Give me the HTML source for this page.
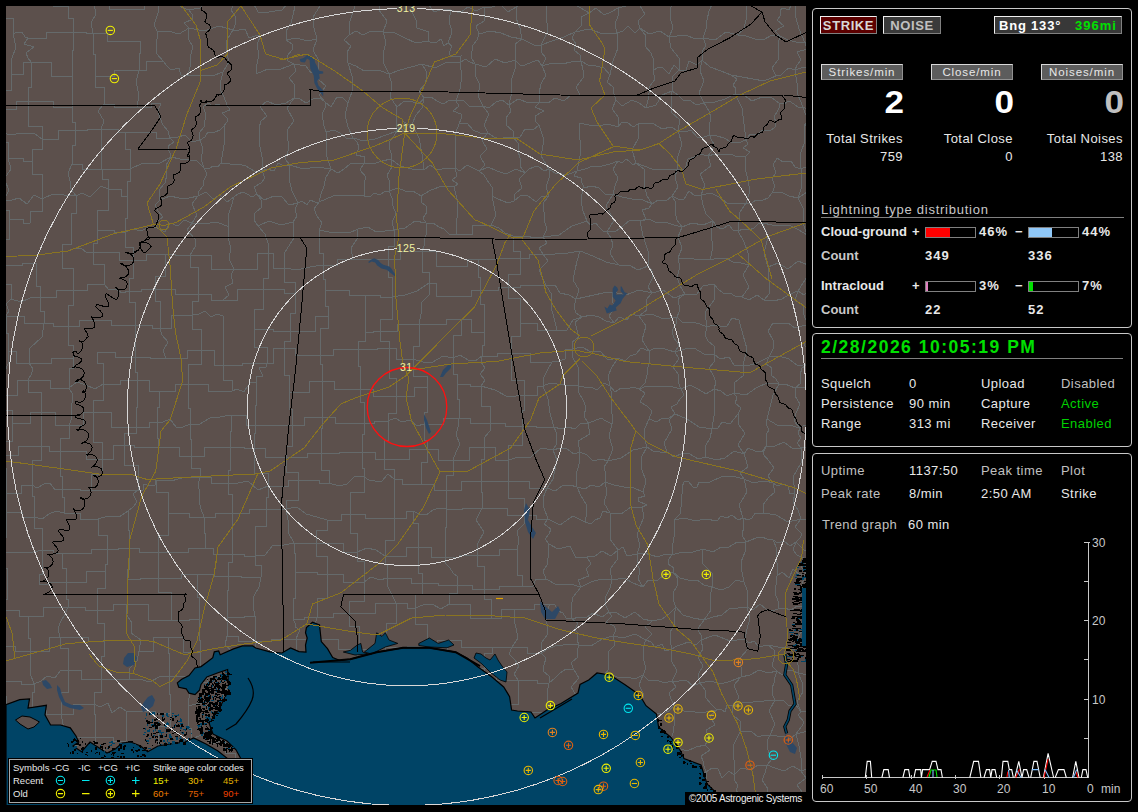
<!DOCTYPE html>
<html><head><meta charset="utf-8">
<style>
*{margin:0;padding:0;box-sizing:border-box}
html,body{width:1138px;height:812px;background:#000;overflow:hidden;font-family:"Liberation Sans",sans-serif;color:#e8e8e8}
.abs{position:absolute;white-space:nowrap}
#map{position:absolute;left:6px;top:6px;width:800px;height:799px;background:#5c504c;overflow:hidden}
#map svg{position:absolute;left:-6px;top:-6px}
.box{position:absolute;left:812px;width:320px;border:1px solid #c8c8c8;border-radius:4px}
.btn{position:absolute;border:1px solid;border-color:#f0f0f0 #808080 #808080 #f0f0f0;font-weight:bold;font-size:13px;line-height:18px;text-align:center}
.lbtn{position:absolute;height:16px;width:82px;background:#5c5c5c;border:1px solid;border-color:#d8d8d8 #909090 #909090 #d8d8d8;font-size:11.5px;line-height:14px;text-align:center;color:#e8e8e8;letter-spacing:0.9px}
.big{position:absolute;font-weight:bold;font-size:30.5px;line-height:30px;text-align:right;width:82px;transform:scaleX(1.15);transform-origin:right center}
.t13{font-size:13px;line-height:15px;letter-spacing:0.45px}
.t13.b{letter-spacing:0}
.r{text-align:right}
.lg{font-size:9.5px;line-height:11px;color:#e8e8e8}
.b{font-weight:bold}
.bar{position:absolute;width:51px;height:11px;border:1px solid #808080;background:#000}
.bar div{height:100%}
</style></head><body>
<div id="map">
<svg width="812" height="812" viewBox="0 0 812 812">
<g fill="none" stroke="#656a6b" stroke-width="1" shape-rendering="crispEdges">
<path d="M3 5L29 5L29 3L44 3M3 5L3 18L13 18L13 34M44 3L53 3L53 6L68 6M68 6L77 3L85 2L94 4M68 6L68 18L73 18L73 32M94 4L109 4L109 9L134 9M94 4L96 14L91 23L93 33M134 9L144 9L144 0L157 0M157 0L166 -0L174 1L181 7L189 10M157 0L159 7L158 13L156 19L154 25L157 31M189 10L200 8L209 -0L220 -3L231 -4M189 10L192 14L193 19L184 23L189 28M231 -4L241 -1L252 1L258 12L269 12M231 -4L235 2L231 10L235 16L236 23L233 30M269 12L275 11L282 10L287 4L295 6M295 6L298 0L303 -1L309 -1L315 2L318 -5M295 6L293 15L291 23L286 31L286 40M318 -5L331 -7L344 -3L357 -4M318 -5L320 6L313 17L314 28L317 39M357 -4L363 -2L369 2L377 -6L382 -1M357 -4L354 9L350 21L349 35M382 -1L392 3L402 0L412 3M382 -1L379 10L387 21L383 32M412 3L420 2L428 4L434 12L443 9L451 10M412 3L412 12L416 20L417 28L429 32L428 41M451 10L460 13L468 7L476 11L484 7M451 10L449 21L452 32L448 43M484 7L492 7L500 4L508 12L516 7M484 7L484 14L484 21L476 26L479 34M516 7L526 2L536 -0L547 0M516 7L516 18L520 28L522 39M547 0L562 3L576 5L589 13M547 0L546 15L548 31L541 45M589 13L596 8L604 15L611 12L618 8M589 13L581 17L581 26L575 32M618 8L626 6L633 0L641 -1M618 8L618 16L615 24L617 33M641 -1L648 -6L656 -3L665 1L672 -4M641 -1L640 6L645 14L638 21L640 28M672 -4L681 -7L688 -0L697 -2L705 0L713 2M672 -4L671 7L670 17L673 28L669 37M713 2L720 5L726 1L733 2L740 5L746 2M713 2L709 11L707 20L706 29L703 38M746 2L746 11L746 20L744 28L738 35M780 10L783 8L789 10L791 5L791 -0L795 -1M780 10L781 15L777 20L784 26L775 31L780 36M795 -1L811 -3L827 6L843 3M795 -1L795 14L799 29L805 43M843 3L844 12L834 15L832 22L830 30M13 34L17 32L22 32L25 37L28 38M13 34L16 47L11 61L11 74M28 38L46 38L46 32L73 32M28 38L24 44L34 47L26 53L28 58L31 62M73 32L86 32L86 33L93 33M73 32L73 50L72 50L72 76M93 33L107 33L107 41L140 41M93 33L93 54L95 54L95 76M140 41L140 53L139 53L139 70M157 31L168 31L179 34L189 28M157 31L157 39L156 47L157 54L163 61M189 28L204 31L219 26L233 30M189 28L188 38L193 47L190 57L190 67L188 76M233 30L239 30L245 29L249 38L255 36L261 35M233 30L227 40L226 50L229 62L223 72M261 35L257 44L259 55L257 64L256 74M286 40L297 38L307 41L317 39M286 40L292 44L293 49L287 56L288 61L294 64M317 39L313 50L319 61L318 72M349 35L356 31L363 35L369 32L376 31L383 32M349 35L344 40L351 46L347 52L347 57L348 63M383 32L395 33L405 38L416 43L428 41M383 32L386 42L383 54L384 64L389 74M428 41L432 43L437 42L441 39L444 46L448 43M448 43L452 46L449 53L451 57L461 56L460 63M479 34L490 31L501 33L511 37L522 39M479 34L477 40L473 45L472 51L471 57L475 64M522 39L528 42L534 45L541 45M522 39L515 44L516 52L515 60M541 45L552 41L564 37L575 32M541 45L541 52L546 58L542 66M575 32L589 29L603 34L617 33M575 32L572 38L576 44L574 50L580 55L581 61M617 33L623 31L628 26L635 33L640 28M617 33L618 48L613 61L610 75M640 28L649 34L660 31L669 37M640 28L646 36L645 46L651 53L654 61L653 71M669 37L677 36L686 35L695 39L703 38M669 37L671 48L679 58L679 70M703 38L715 40L726 32L738 35M703 38L706 45L702 52L702 60M738 35L746 36L755 39L763 40L772 35L780 36M780 36L788 40L796 42L805 43M780 36L778 44L779 52L778 60L772 68L776 76M805 43L813 37L821 32L830 30M805 43L807 49L797 52L801 60L797 65L795 70M830 30L827 39L832 47L834 55L831 64L836 72M11 74L23 74L23 62L31 62M11 74L11 90L1 90L1 109M31 62L51 62L51 76L72 76M31 62L31 87L28 87L28 101M72 76L72 90L72 90L72 107M95 76L114 76L114 70L139 70M95 76L95 87L104 87L104 104M139 70L146 70L146 61L163 61M139 70L136 82L139 95L137 107M163 61L167 66L171 70L179 68L181 75L188 76M188 76L200 75L212 76L223 72M223 72L221 80L220 89L224 97L227 105M256 74L268 69L281 69L294 64M294 64L300 65L306 66L311 73L318 72M294 64L296 71L289 78L294 84L295 91L294 98M318 72L319 80L326 86L319 95L325 102M348 63L356 66L364 71L373 70L381 71L389 74M348 63L352 76L353 89L348 103M389 74L400 70L411 67L422 64M389 74L392 85L390 97L397 107M422 64L435 68L447 62L460 63M422 64L426 71L427 77L425 84L419 91L424 98M460 63L465 59L470 62L475 64M460 63L462 76L460 89L456 101M475 64L486 67L495 59L505 63L515 60M475 64L475 75L480 85L478 96L483 106M515 60L520 65L525 65L532 62L538 60L542 66M515 60L515 69L512 78L511 87L511 96L509 105M542 66L552 63L562 64L571 62L581 61M542 66L546 75L541 84L539 93L540 102M581 61L588 65L596 66L604 68L610 75M581 61L583 70L583 78L576 87L580 95M610 75L607 82L613 87L614 94L616 100M653 71L658 67L663 68L669 74L674 65L679 70M653 71L655 79L650 86L649 93L648 100L646 108M679 70L686 70L689 61L697 65L702 60M679 70L673 76L672 83L672 91M702 60L710 67L721 71L731 75M702 60L700 71L704 81L699 93L704 103M731 75L742 77L753 79L764 81L776 76M731 75L737 79L733 85L736 89L735 94M776 76L781 75L785 71L789 68L795 70M795 70L804 67L812 70L819 75L828 72L836 72M795 70L797 83L798 95L803 107M836 72L833 78L834 84L833 91L835 97L833 103M1 109L16 109L16 101L28 101M1 109L1 121L-1 121L-1 131M28 101L53 101L53 107L72 107M28 101L28 126L42 126L42 139M72 107L72 122L75 122L75 130M104 104L114 104L114 107L137 107M104 104L98 111L104 121L101 129M137 107L151 107L151 103L161 103M161 103L158 111L160 118L163 125L168 131L170 138M203 107L208 103L213 106L217 104L222 106L227 105M203 107L206 114L205 120L204 127L199 133L200 140M227 105L230 110L222 113L227 118L227 122L224 126M267 101L276 105L286 103L294 98M267 101L260 107L267 116L261 121L259 128M294 98L300 99L306 103L313 99L320 98L325 102M294 98L287 108L294 121L287 130M325 102L331 107L337 97L343 98L348 103M325 102L325 108L322 114L323 120L324 126L326 132M348 103L345 115L348 127L353 138M397 107L403 102L410 101L419 104L424 98M397 107L396 115L396 123L397 131M424 98L431 97L437 101L443 104L450 100L456 101M424 98L422 108L416 115L412 124M456 101L463 100L469 106L476 106L483 106M456 101L459 106L453 111L461 114L461 119L459 124M483 106L489 108L496 102L502 100L509 105M483 106L489 114L484 125L488 133M509 105L518 99L529 103L540 102M509 105L511 111L506 118L506 125L513 131L513 137M540 102L548 103L555 98L564 101L571 95L580 95M540 102L535 107L544 111L535 116L535 121L539 125M616 100L622 106L632 100L639 103L646 108M616 100L612 109L619 118L618 127M646 108L656 105L662 95L672 91M672 91L678 95L683 100L691 101L696 105L704 103M672 91L671 102L671 112L680 120L678 131M704 103L715 102L725 99L735 94M704 103L709 111L711 118L709 127L710 135M735 94L744 95L752 101L762 97L771 97L779 103M735 94L742 108L744 124L746 140M779 103L784 104L789 101L794 104L798 107L803 107M779 103L779 108L777 112L774 117L776 122L775 127M803 107L811 111L817 100L826 107L833 103M803 107L805 113L808 120L804 126M833 103L826 112L834 123L827 131M-1 131L7 134L16 134L25 133L34 133L42 139M-1 131L-1 142L8 142L8 158M42 139L58 139L58 130L75 130M42 139L42 149L32 149L32 161M75 130L87 130L87 129L101 129M75 130L75 145L72 145L72 164M101 129L118 129L118 132L125 132M101 129L102 142L101 155L102 169M125 132L156 132L156 138L170 138M125 132L125 149L130 149L130 169M170 138L178 137L185 135L192 142L200 140M170 138L174 142L168 146L168 149L170 153L171 157M200 140L205 137L208 132L215 132L220 130L224 126M200 140L203 149L201 159L204 168M224 126L225 139L223 151L221 163M259 128L259 142L262 157L262 171M287 130L287 137L289 144L288 151L285 159L290 165M326 132L334 130L340 133L346 138L353 138M326 132L326 145L327 157L331 169M353 138L364 141L375 139L386 135L397 131M353 138L357 142L359 147L356 155L365 157L364 163M397 131L399 127L405 132L404 122L409 125L412 124M397 131L394 136L390 141L389 147L391 153L391 159M412 124L419 138L422 154L424 170M459 124L467 123L473 130L480 133L488 133M459 124L456 132L455 141L455 150L456 159L455 168M488 133L494 137L500 139L506 137L513 137M488 133L482 140L487 149L480 156L485 165L479 171M513 137L520 137L525 129L533 130L539 125M513 137L518 143L518 151L520 158L520 166L525 173M539 125L544 140L541 156L549 169M579 123L589 125L598 126L608 124L618 127M579 123L580 140L580 156L577 171M618 127L622 122L627 122L633 127L638 124M638 124L646 123L654 124L662 129L671 127L678 131M638 124L639 137L632 150L636 163M678 131L685 132L691 130L697 137L704 137L710 135M678 131L682 144L678 156L677 169M710 135L717 136L724 138L731 142L738 143L746 140M710 135L711 139L714 144L713 148L711 152L708 156M746 140L750 134L758 135L762 130L770 131L775 127M746 140L748 144L743 148L750 152L746 156M804 126L810 125L816 126L820 134L827 131M804 126L805 141L800 155L801 169M827 131L823 141L829 149L830 158M8 158L23 158L23 161L32 161M8 158L11 169L4 179L9 190L4 200M32 161L32 174L42 174L42 199M72 164L82 164L82 169L102 169M72 164L68 173L70 181L71 189L76 196M102 169L111 169L111 169L130 169M102 169L102 179L108 179L108 189M130 169L143 163L158 164L171 157M130 169L130 181L127 181L127 196M171 157L180 159L189 160L197 161L204 168M171 157L166 165L167 174L165 183L159 190L160 200M204 168L209 169L213 166L218 167L221 163M204 168L207 174L204 180L203 186L199 191L198 196M221 163L230 164L238 164L246 166L254 171L262 171M262 171L267 169L274 171L278 163L284 166L290 165M262 171L265 178L261 183L254 187L257 194M290 165L303 169L317 167L331 169M290 165L289 179L292 191L298 203M331 169L338 173L344 169L350 164L357 163L364 163M331 169L326 177L324 186L321 194L319 202M364 163L373 164L382 161L391 159M364 163L360 170L366 177L364 183L364 190L364 196M391 159L400 166L412 169L424 170M391 159L392 167L387 175L390 183L389 191M424 170L430 165L436 169L442 169L448 168L455 168M455 168L460 171L467 165L473 168L479 171M455 168L456 172L457 176L452 180L458 184L454 187M479 171L488 167L497 171L506 174L516 169L525 173M479 171L484 175L487 180L490 184L493 189L492 196M525 173L529 169L534 167L538 166L544 171L549 169M525 173L519 179L522 188L515 194L514 201M549 169L555 173L562 174L569 174L577 171M549 169L549 178L546 187L549 196M577 171L585 169L593 166L602 166L610 164L618 161M577 171L574 176L581 178L581 181L583 185L583 188M618 161L622 163L626 159L629 161L633 165L636 163M618 161L613 169L618 178L615 186L613 194M636 163L644 166L652 169L660 169L668 170L677 169M636 163L644 169L644 179L645 188L647 196L652 204M677 169L685 169L688 159L694 157L700 154L708 156M677 169L675 178L678 187L672 196M708 156L715 154L723 155L730 154L738 157L746 156M708 156L711 166L700 174L705 185L701 195M746 156L745 168L748 180L750 191L746 203M777 158L783 162L791 161L795 167L801 169M777 158L773 165L776 172L772 179L775 186L772 193M801 169L808 166L815 163L823 161L830 158M801 169L802 179L801 189L798 198M830 158L830 165L834 171L840 176L844 182L844 189M4 200L12 200L19 198L27 204L34 195L42 199M4 200L4 210L9 210L9 219M42 199L53 194L64 195L76 196M42 199L42 211L30 211L30 223M76 196L82 193L90 197L95 192L101 186L108 189M76 196L76 213L71 213L71 225M108 189L121 189L121 196L127 196M108 189L108 210L97 210L97 230M127 196L127 218L125 218L125 232M160 200L170 196L179 198L189 198L198 196M160 200L155 205L158 211L163 217L156 222L157 228M198 196L206 192L213 199L220 195L227 202L234 197M198 196L192 204L197 215L192 223M234 197L238 194L243 192L247 194L252 197L257 194M234 197L231 207L228 216L229 227M257 194L264 200L274 196L282 197L289 205L298 203M257 194L261 200L262 207L255 213L254 220L258 226M298 203L302 201L307 205L310 200L315 202L319 202M298 203L295 209L297 216L293 222M319 202L333 196L349 195L364 196M319 202L314 209L317 216L322 223L319 230M364 196L370 197L374 193L380 195L384 192L389 191M389 191L398 188L405 191L413 191L421 196M389 191L392 198L393 206L396 214L392 222L394 230M421 196L431 190L442 186L454 187M421 196L421 202L426 206L427 212L423 218L426 223M454 187L458 203L457 218L456 234M492 196L498 199L503 201L508 203L514 201M492 196L494 206L496 215L491 225M514 201L520 196L527 195L536 202L542 196L549 196M549 196L543 203L544 212L544 220L547 229L543 237M583 188L592 186L599 188L605 194L613 194M583 188L581 200L583 211L587 221M613 194L622 197L632 199L643 200L652 204M613 194L606 206L614 220L607 232M652 204L658 200L666 201L672 196M652 204L649 208L642 210L646 219L640 221M672 196L678 199L684 199L689 191L695 196L701 195M672 196L676 203L675 212L677 220L682 227M701 195L711 193L719 197L727 203L736 204L746 203M701 195L703 205L706 214L713 221M746 203L752 203L756 200L763 200L768 198L772 193M746 203L740 212L739 222L738 231M772 193L781 192L789 196L798 198M798 198L807 192L817 196L825 191L834 189L844 189M798 198L804 210L803 223L807 235M844 189L846 200L846 210L844 221M9 219L23 219L23 223L30 223M9 219L9 239L4 239L4 265M71 225L71 244L62 244L62 252M97 230L114 230L114 232L125 232M97 230L97 243L93 243L93 252M125 232L133 229L141 231L149 227L157 228M125 232L125 247L133 247L133 260M157 228L165 232L170 223L178 226L184 220L192 223M192 223L204 224L217 222L229 227M192 223L187 230L195 239L195 247L190 255M229 227L228 238L231 248L229 259L234 269M258 226L269 221L281 225L293 222M258 226L265 234L268 243L268 253M293 222L294 238L285 252L284 268M319 230L329 232L339 232L349 233L358 229M319 230L319 253L323 253L323 265M358 229L368 227L376 232L385 231L394 230M358 229L357 239L351 248L353 259M394 230L405 228L415 221L426 223M394 230L394 246L388 246L388 259M426 223L433 223L439 227L444 229L449 234L456 234M426 223L426 229L426 235L424 240L424 246L422 251M456 234L472 234L472 225L491 225M491 225L499 228L505 233L513 236M513 236L530 236L530 237L543 237M513 236L513 251L520 251L520 258M543 237L559 235L572 226L587 221M543 237L547 243L539 248L543 254M587 221L590 225L596 223L599 227L603 231L607 232M607 232L616 231L623 226L630 220L640 221M607 232L611 238L613 245L610 253L614 260L619 265M640 221L649 219L657 223L665 222L674 225L682 227M640 221L643 236L648 251L648 266M682 227L692 223L703 225L713 221M682 227L678 237L682 248L678 258M713 221L717 227L722 229L729 225L733 230L738 231M713 221L711 234L713 247L710 260M738 231L743 229L749 230L754 228L758 224L763 223M738 231L744 242L748 253L749 265M763 223L772 225L782 225L791 226L799 230L807 235M763 223L768 237L764 253L768 267M807 235L816 237L823 233L831 230L838 227L844 221M807 235L806 245L809 255L808 265M844 221L847 231L846 240L843 249L842 258M4 265L22 265L22 263L36 263M4 265L4 284L11 284L11 299M36 263L36 286L40 286L40 297M62 252L68 251L75 248L81 248L87 253L93 252M62 252L62 268L73 268L73 290M93 252L119 252L119 260L133 260M93 252L93 264L104 264L104 284M133 260L146 260L146 254L165 254M133 260L133 278L129 278L129 291M165 254L175 254L175 255L190 255M165 254L165 276L155 276L155 289M190 255L211 255L211 269L234 269M190 255L190 267L198 267L198 294M234 269L257 269L257 253L268 253M234 269L231 275L233 283L225 287L229 295L223 300M268 253L273 253L273 268L284 268M268 253L268 278L263 278L263 289M284 268L297 270L310 267L323 265M284 268L284 282L295 282L295 293M323 265L337 265L337 259L353 259M323 265L323 279L325 279L325 290M353 259L375 259L375 259L388 259M388 259L400 259L400 251L422 251M388 259L388 277L392 277L392 297M422 251L436 251L436 266L456 266M422 251L422 272L429 272L429 283M456 266L467 266L467 259L478 259M478 259L495 259L495 258L520 258M478 259L478 277L480 277L480 290M520 258L529 258L529 254L543 254M520 258L520 274L508 274L508 287M543 254L555 254L568 253L580 251M543 254L548 261L539 270L542 277L546 285M580 251L593 256L606 262L619 265M580 251L577 261L575 270L573 280L579 290L576 299M619 265L629 265L638 270L648 266M648 266L653 272L652 279L648 287L652 293M678 258L686 258L694 259L702 259L710 260M678 258L680 267L677 277L680 286L685 294M710 260L718 258L726 258L733 262L741 263L749 265M749 265L743 275L749 287L742 297M768 267L778 263L788 269L798 261L808 265M768 267L768 274L769 281L769 287L769 294L764 300M808 265L819 260L831 264L842 258M808 265L808 275L803 283L798 291M842 258L836 264L841 273L835 279L836 287L830 292M11 299L21 302L30 298L40 297M11 299L6 304L9 311L6 316M40 297L56 297L56 290L73 290M40 297L40 311L44 311L44 323M73 290L87 290L87 284L104 284M73 290L73 305L68 305L68 326M104 284L109 290L116 289L122 293L129 291M129 291L141 291L141 289L155 289M129 291L129 302L135 302L135 325M155 289L175 289L175 294L198 294M155 289L155 301L160 301L160 328M198 294L211 294L211 300L223 300M198 294L198 301L192 301L192 315M223 300L237 300L237 289L263 289M263 289L284 289L284 293L295 293M263 289L263 309L254 309L254 329M295 293L295 313L290 313L290 331M325 290L349 290L349 295L365 295M325 290L325 306L328 306L328 316M365 295L380 295L380 297L392 297M365 295L365 314L365 314L365 332M392 297L405 295L417 291L429 283M392 297L392 319L380 319L380 331M429 283L436 283L436 296L454 296M429 283L430 294L421 303L421 314L419 324M454 296L471 296L471 290L480 290M480 290L498 290L498 287L508 287M480 290L480 304L484 304L484 332M508 287L520 287L520 285L546 285M508 287L508 298L520 298L520 323M546 285L555 285L560 293L569 295L576 299M546 285L552 295L551 307L554 318L557 330M576 299L585 297L594 295L603 293L613 292M576 299L574 307L576 313L582 317M613 292L626 295L639 290L652 293M613 292L612 300L615 308L609 316L614 323M652 293L663 290L674 298L685 294M652 293L646 300L647 310L639 316M685 294L696 295L703 286L714 284M685 294L678 299L679 305L679 312L677 317M714 284L718 289L723 293L730 293L735 296L742 297M714 284L715 299L705 312L707 327M742 297L749 300L757 295L764 300M764 300L773 301L782 299L790 294L798 291M798 291L804 295L811 287L817 287L824 294L830 292M798 291L795 300L803 305L803 312L805 318L809 325M830 292L838 300L833 314L839 323L845 332M6 316L24 316L24 323L44 323M6 316L6 333L8 333L8 351M44 323L53 323L53 326L68 326M44 323L42 337L30 348L29 363M68 326L79 326L79 320L98 320M68 326L68 345L73 345L73 358M98 320L111 320L111 325L135 325M135 325L152 325L152 328L160 328M135 325L135 335L135 335L135 357M160 328L171 328L171 315L192 315M160 328L162 335L168 342L163 351L166 358M192 315L199 314L205 311L211 317L217 314L223 316M192 315L192 329L201 329L201 350M223 316L223 348L223 348L223 365M254 329L273 329L273 331L290 331M254 329L254 347L267 347L267 363M290 331L315 331L315 316L328 316M290 331L290 341L284 341L284 348M328 316L328 328L320 328L320 355M365 332L373 332L373 331L380 331M365 332L365 341L358 341L358 349M380 331L397 331L397 324L419 324M380 331L380 341L389 341L389 348M419 324L446 324L446 319L461 319M419 324L419 346L413 346L413 359M461 319L471 319L471 332L484 332M461 319L461 335L453 335L453 358M484 332L484 345L482 345L482 356M520 323L537 323L537 330L557 330M520 323L520 336L511 336L511 353M557 330L567 330L573 320L582 317M582 317L591 315L599 317L606 321L614 323M582 317L575 322L577 330L579 337L572 342L572 349M614 323L619 317L627 320L631 314L639 316M639 316L651 314L664 319L677 317M639 316L646 326L642 340L649 351M677 317L683 323L692 322L700 324L707 327M677 317L676 324L672 331L674 338L679 345L675 352M707 327L713 325L720 326L727 326L732 318L739 320M707 327L705 335L708 341L714 346L714 354M739 320L743 335L747 349L743 365M773 323L781 323L788 323L795 328L802 326L809 325M773 323L768 331L773 340L773 349L769 357M809 325L820 330L834 326L845 332M809 325L810 334L804 344L810 354L808 364M845 332L844 337L841 341L840 346L836 349L835 354M8 351L16 351L16 363L29 363M8 351L9 361L6 369L1 377L-1 386L-3 395M29 363L51 363L51 358L73 358M29 363L33 369L31 375L28 380M73 358L73 368L69 368L69 388M97 352L115 352L115 357L135 357M97 352L97 363L103 363L103 384M135 357L150 357L150 358L166 358M135 357L135 372L137 372L137 380M166 358L187 358L187 350L201 350M201 350L214 350L214 365L223 365M201 350L201 364L188 364L188 384M223 365L242 365L242 363L267 363M223 365L223 380L232 380L232 391M267 363L273 363L273 348L284 348M267 363L266 367L259 368L263 376L256 377L256 382M284 348L295 348L295 355L320 355M284 348L284 375L289 375L289 392M320 355L333 355L333 349L358 349M320 355L320 364L322 364L322 381M358 349L377 349L377 348L389 348M358 349L358 366L360 366L360 389M389 348L396 348L396 359L413 359M389 348L389 378L396 378L396 396M413 359L423 362L433 362L443 356L453 358M413 359L413 376L427 376L427 387M453 358L460 355L468 360L475 361L482 356M453 358L453 374L457 374L457 384M482 356L497 356L497 353L511 353M482 356L481 362L485 368L480 374L485 380L481 386M511 353L530 353L530 362L552 362M511 353L511 380L524 380L524 395M552 362L559 361L565 359L565 349L572 349M552 362L548 369L544 377L543 386M572 349L582 347L591 352L600 351L608 360L618 358M572 349L573 358L578 367L578 376L578 386M618 358L625 361L630 356L636 354L641 348L649 351M618 358L612 367L608 376L610 386M649 351L655 348L662 348L668 350L675 352M649 351L650 359L648 367L647 375L645 383L639 389M675 352L685 349L694 348L704 354L714 354M675 352L679 359L673 367L678 374L678 382L681 389M714 354L720 359L729 357L734 365L743 365M714 354L715 361L709 368L713 375L716 382L714 389M743 365L750 365L757 363L763 360L769 357M743 365L744 375L734 383L734 393M769 357L779 356L789 359L798 366L808 364M769 357L766 364L772 368L771 375L776 379L779 384M808 364L814 357L822 360L827 354L835 354M808 364L802 368L800 375L801 383L795 388M-3 395L17 395L17 380L28 380M-3 395L-3 410L12 410L12 423M28 380L50 380L50 388L69 388M28 380L28 392L41 392L41 412M69 388L77 382L86 385L95 389L103 384M69 388L73 395L72 403L71 410L72 418L69 425M103 384L120 384L120 380L137 380M103 384L103 400L93 400L93 412M137 380L149 380L149 391L159 391M137 380L137 407L136 407L136 427M159 391L175 391L175 384L188 384M159 391L159 407L157 407L157 422M188 384L208 384L208 391L232 391M188 384L188 408L190 408L190 424M232 391L237 389L244 392L247 387L251 382L256 382M256 382L256 405L255 405L255 425M289 392L309 392L309 381L322 381M289 392L289 409L292 409L292 425M322 381L334 381L334 389L360 389M322 381L322 398L322 398L322 417M360 389L373 389L373 396L396 396M360 389L360 402L364 402L364 423M396 396L414 396L414 387L427 387M396 396L396 413L388 413L388 421M427 387L427 412L424 412L424 424M457 384L470 384L470 386L481 386M457 384L457 399L459 399L459 418M481 386L495 390L508 397L524 395M481 386L481 406L490 406L490 423M524 395L537 395L537 386L543 386M524 395L524 410L522 410L522 426M543 386L550 383L557 384L564 385L571 385L578 386M543 386L548 399L550 413L554 427M578 386L584 387L591 387L597 390L604 383L610 386M578 386L579 393L583 400L586 407L584 416L588 423M610 386L615 392L621 388L627 389L633 387L639 389M610 386L612 395L611 405L612 414L612 424M639 389L647 386L656 386L664 386L673 387L681 389M639 389L645 393L640 402L647 406L652 411L649 419M681 389L690 385L698 389L706 394L714 389M681 389L684 395L680 399L677 404L671 407L675 414M714 389L721 391L727 396L734 393M714 389L714 402L714 416L712 429M734 393L746 395L756 388L767 383L779 384M734 393L737 398L735 403L741 408L738 414M779 384L785 384L790 386L795 388M779 384L773 395L770 407L767 419M795 388L809 387L823 394L837 389M795 388L795 396L800 404L796 413L794 421L800 428M837 389L838 400L831 407L828 417M12 423L30 423L30 412L41 412M12 423L12 441L-3 441L-3 455M41 412L55 412L55 425L69 425M41 412L41 434L41 434L41 446M69 425L83 425L83 412L93 412M69 425L69 438L60 438L60 451M93 412L111 412L111 427L136 427M93 412L93 442L102 442L102 459M136 427L149 427L149 422L157 422M136 427L136 433L124 433L124 445M157 422L163 422L170 419L176 427L183 427L190 424M157 422L157 438L158 438L158 447M190 424L200 424L210 418L220 417L231 415M190 424L190 439L191 439L191 456M231 415L246 415L246 425L255 425M231 415L231 431L230 431L230 447M255 425L280 425L280 425L292 425M255 425L255 433L254 433L254 448M292 425L304 425L304 417L322 417M292 425L292 446L286 446L286 457M322 417L335 417L335 423L364 423M322 417L322 428L321 428L321 453M364 423L374 423L374 421L388 421M364 423L364 434L362 434L362 452M388 421L395 418L402 422L410 420L417 426L424 424M388 421L388 440L384 440L384 459M424 424L443 424L443 418L459 418M424 424L424 440L427 440L427 449M459 418L470 418L470 423L490 423M459 418L458 427L456 435L460 444L456 452L453 460M490 423L505 423L505 426L522 426M490 423L490 431L484 438L484 447M522 426L536 426L536 427L554 427M522 426L522 445L508 445L508 460M554 427L561 429L568 427L575 429L581 423L588 423M554 427L556 432L557 436L556 441L556 445L553 450M588 423L594 421L601 418L606 421L612 424M588 423L590 434L578 441L580 452M612 424L609 436L613 449L608 461M649 419L657 422L662 418L669 418L675 414M649 419L645 428L644 437L647 447M675 414L687 419L699 427L712 429M675 414L669 420L672 429L668 436L664 443L667 452M712 429L718 428L722 422L730 424L734 419L738 414M712 429L710 438L705 447L706 457M738 414L738 424L745 433L738 445L744 454M767 419L777 425L789 425L800 428M767 419L766 424L769 430L766 435L766 440L766 446M800 428L805 425L812 426L816 418L822 418L828 417M800 428L798 433L801 438L797 443L801 448M828 417L833 423L832 432L832 440L837 446L843 452M-3 455L18 455L18 446L41 446M-3 455L-3 468L6 468L6 493M41 446L49 446L49 451L60 451M41 446L41 460L32 460L32 485M60 451L86 451L86 459L102 459M60 451L60 476L62 476L62 489M102 459L113 459L113 445L124 445M102 459L102 474L91 474L91 490M124 445L134 445L134 447L158 447M124 445L124 465L138 465L138 490M158 447L179 447L179 456L191 456M191 456L204 456L204 447L230 447M191 456L191 468L200 468L200 477M230 447L244 447L244 448L254 448M230 447L230 470L228 470L228 483M254 448L265 448L265 457L286 457M254 448L254 473L268 473L268 486M286 457L307 457L307 453L321 453M286 457L286 472L298 472L298 480M321 453L339 453L339 452L362 452M321 453L321 470L329 470L329 483M362 452L375 452L375 459L384 459M362 452L362 468L364 468L364 477M384 459L409 459L409 449L427 449M384 459L384 469L394 469L394 479M427 449L438 449L438 460L453 460M427 449L427 462L421 462L421 484M453 460L469 460L469 447L484 447M453 460L453 475L446 475L446 490M484 447L495 447L495 460L508 460M484 447L484 459L481 459L481 481M508 460L519 457L531 457L541 448L553 450M508 460L508 472L508 472L508 481M553 450L560 448L567 449L574 454L580 452M553 450L557 460L555 470L553 479L547 488M580 452L587 455L593 461L601 459L608 461M580 452L579 464L576 475L577 487M608 461L621 458L633 450L647 447M608 461L604 467L606 475L605 482M647 447L653 451L660 452L667 452M647 447L641 458L642 470L646 481L643 492M667 452L674 457L683 453L690 454L698 459L706 457M706 457L716 460L725 458L734 451L744 454M744 454L748 448L755 451L762 452L766 446M744 454L746 460L748 467L740 473L744 479M766 446L775 446L784 442L792 448L801 448M766 446L763 454L769 461L774 468L768 476L773 483M801 448L815 446L829 448L843 452M801 448L801 463L793 477L795 493M6 493L21 493L21 485L32 485M6 493L6 500L6 500L6 512M32 485L37 488L44 484L50 483L55 490L62 489M32 485L32 496L34 496L34 517M62 489L80 489L80 490L91 490M62 489L62 497L64 497L64 513M91 490L107 490L107 490L138 490M138 490L143 490L144 484L150 486L155 485L156 480M138 490L133 494L137 502L133 507L128 511M156 480L171 481L185 477L200 477M156 480L156 492L168 492L168 513M200 477L211 477L211 483L228 483M200 477L198 485L200 493L199 501L201 509L204 517M228 483L238 483L248 481L258 490L268 486M228 483L228 494L232 494L232 513M268 486L288 486L288 480L298 480M268 486L268 497L266 497L266 509M298 480L319 480L319 483L329 483M298 480L298 500L286 500L286 509M329 483L339 486L347 484L355 476L364 477M364 477L369 480L375 481L382 481L388 474L394 479M364 477L364 492L350 492L350 514M394 479L402 479L402 484L421 484M394 479L394 491L394 491L394 518M421 484L434 484L434 490L446 490M446 490L461 490L461 481L481 481M446 490L446 499L446 499L446 509M481 481L496 481L496 481L508 481M481 481L481 492L482 492L482 508M508 481L529 481L529 488L547 488M508 481L508 498L524 498L524 515M547 488L555 491L562 486L570 485L577 487M547 488L543 498L544 508L548 519M577 487L585 489L591 485L599 487L605 482M577 487L581 496L586 504L587 512L585 522M605 482L614 485L624 487L634 488L643 492M605 482L607 492L604 503L610 513M643 492L645 496L638 498L638 501L647 505L642 507M682 487L684 482L688 481L693 487L697 487L699 482M682 487L682 494L681 500L681 507L680 514L674 520M699 482L710 482L721 477L732 476L744 479M744 479L751 482L758 482L766 481L773 483M744 479L747 492L739 505L743 518M773 483L777 486L783 484L788 486L790 494L795 493M773 483L775 492L768 498L763 505L763 513M795 493L793 502L798 510L801 519M841 479L842 489L833 495L833 506L829 514M6 512L22 512L22 517L34 517M6 512L6 537L4 537L4 553M34 517L42 519L49 514L56 511L64 513M34 517L34 528L42 528L42 550M64 513L80 513L80 519L98 519M98 519L108 516L119 517L128 511M98 519L98 535L107 535L107 549M128 511L128 530L129 530L129 548M168 513L189 513L189 517L204 517M168 513L168 535L158 535L158 552M204 517L215 517L215 513L232 513M204 517L204 533L205 533L205 548M232 513L249 513L249 509L266 509M232 513L232 530L232 530L232 554M266 509L276 509L276 509L286 509M266 509L266 526L255 526L255 556M286 509L297 507L306 514L317 517L327 520M286 509L288 520L288 532L294 543M327 520L341 520L341 514L350 514M327 520L327 530L316 530L316 543M350 514L365 514L365 518L394 518M350 514L350 533L357 533L357 552M394 518L406 518L406 511L413 511M394 518L394 540L385 540L385 556M413 511L419 514L426 515L433 510L439 508L446 509M413 511L413 523L418 523L418 547M446 509L462 509L462 508L482 508M446 509L446 527L445 527L445 557M482 508L507 508L507 515L524 515M482 508L476 520L484 532L478 543L477 555M524 515L536 515L536 519L548 519M524 515L524 524L517 531L519 541L517 549M548 519L560 525L573 516L585 522M548 519L544 524L551 529L549 534L545 539L549 544M585 522L591 524L595 520L600 518L603 511L610 513M610 513L621 514L631 507L642 507M610 513L610 526L610 539L618 550M642 507L644 517L640 526L637 535L640 545L637 554M674 520L685 518L695 521L706 519L717 521M674 520L675 532L673 543L672 555M717 521L721 516L727 518L732 515L738 520L743 518M743 518L748 520L752 518L755 513L759 514L763 513M743 518L744 526L742 535L746 542M763 513L776 515L788 522L801 519M801 519L808 519L814 512L821 512L829 514M801 519L798 523L795 527L802 534L800 538L796 542M829 514L835 521L839 529L837 540L837 549L845 556M4 553L17 552L29 553L42 550M4 553L4 568L7 568L7 577M42 550L53 550L53 553L62 553M42 550L42 574L39 574L39 584M62 553L91 553L91 549L107 549M62 553L62 568L66 568L66 582M107 549L118 549L118 548L129 548M107 549L107 564L105 564L105 571M129 548L139 548L139 552L158 552M129 548L129 569L127 569L127 579M158 552L188 552L188 548L205 548M158 552L158 565L158 565L158 578M205 548L213 548L213 554L232 554M232 554L244 554L244 556L255 556M232 554L232 562L228 562L228 576M255 556L265 555L273 545L284 545L294 543M255 556L255 565L261 565L261 577M294 543L301 543L301 543L316 543M294 543L294 553L295 553L295 572M316 543L343 543L343 552L357 552M316 543L316 556L327 556L327 574M357 552L367 548L376 550L385 556M357 552L357 561L364 561L364 582M385 556L406 556L406 547L418 547M385 556L385 564L387 564L387 578M418 547L431 547L431 557L445 557M418 547L418 573L422 573L422 583M445 557L459 557L459 555L477 555M445 557L445 563L450 568L453 573L458 577L457 585M477 555L499 555L499 549L517 549M477 555L477 566L484 566L484 589M517 549L517 575L522 575L522 586M549 544L558 549L570 546L576 558L587 557M549 544L548 551L548 558L547 565L543 571L546 579M587 557L595 556L602 551L611 556L618 550M587 557L591 564L586 569L589 576L578 580L581 587M618 550L623 547L627 556L632 555L637 554M618 550L617 560L610 569L612 580M637 554L644 553L651 555L658 557L665 554L672 555M637 554L637 563L640 571L638 579L643 587M672 555L682 552L693 552L703 549M672 555L669 559L668 564L674 568L673 572M703 549L713 552L721 547L729 547L737 542L746 542M703 549L702 563L713 574L712 587M746 542L751 540L756 538L762 537L767 539L773 540M746 542L745 552L741 562L742 572L744 582M773 540L778 543L784 541L790 546L796 542M773 540L777 549L776 558L778 567L777 576M796 542L804 550L814 552L824 554L834 558L845 556M796 542L793 550L797 555L806 559L801 567L806 572M845 556L841 564L837 573L829 579M7 577L7 599L4 599L4 610M39 584L49 584L49 582L66 582M66 582L86 582L86 571L105 571M66 582L66 599L68 599L68 607M105 571L105 588L97 588L97 610M127 579L140 579L140 578L158 578M127 579L127 592L127 592L127 604M158 578L181 578L181 574L197 574M158 578L158 592L171 592L171 620M197 574L214 574L214 576L228 576M197 574L197 597L199 597L199 619M228 576L241 576L241 577L261 577M228 576L228 590L227 590L227 617M261 577L259 587L254 596L253 606L255 616M295 572L317 572L317 574L327 574M295 572L295 598L293 598L293 619M327 574L343 574L343 582L364 582M327 574L327 598L317 598L317 617M364 582L371 577L380 580L387 578M364 582L364 601L349 601L349 613M387 578L411 578L411 583L422 583M387 578L388 587L392 595L396 603M422 583L438 583L438 585L457 585M422 583L422 594L415 594L415 608M457 585L472 585L472 589L484 589M457 585L457 593L449 593L449 604M484 589L499 589L499 586L522 586M484 589L484 599L491 599L491 618M522 586L527 586L533 586L536 579L542 580L546 579M546 579L557 585L570 584L581 587M581 587L591 582L601 579L612 580M581 587L573 597L571 607L572 619M612 580L624 578L633 583L643 587M612 580L610 588L606 596L605 604L609 612M643 587L648 580L658 580L665 574L673 572M673 572L680 578L688 580L697 580L704 585L712 587M673 572L678 579L677 586L673 593L673 600L676 607M712 587L721 590L729 587L736 580L744 582M712 587L710 598L711 610L704 620M744 582L747 590L748 598L747 607M777 576L782 572L789 578L793 569L800 575L806 572M777 576L776 585L775 593L778 601L778 609M806 572L803 581L801 589L804 598L804 606M829 579L836 588L841 599L837 611L843 621M4 610L19 610L19 616L28 616M4 610L4 623L-1 623L-1 646M28 616L43 616L43 607L68 607M28 616L28 638L30 638L30 651M68 607L85 607L85 610L97 610M68 607L65 614L61 621L58 628L60 637M97 610L113 610L113 604L127 604M97 610L97 623L104 623L104 641M127 604L148 604L148 620L171 620M127 604L126 614L132 623L131 633L141 640L139 651M171 620L189 620L189 619L199 619M199 619L199 640L200 640L200 652M227 617L244 617L244 616L255 616M227 617L227 628L227 628L227 636M255 616L255 628L255 628L255 641M293 619L304 619L304 617L317 617M293 619L295 623L295 627L300 630L298 634L296 639M317 617L333 617L333 613L349 613M317 617L315 625L318 632L318 639M349 613L375 613L375 603L396 603M349 613L349 626L359 626L359 649M396 603L407 603L407 608L415 608M396 603L396 623L386 623L386 647M415 608L423 605L432 604L441 609L449 604M415 608L415 624L427 624L427 646M449 604L470 604L470 618L491 618M491 618L501 618L501 609L514 609M514 609L534 609L534 604L550 604M514 609L514 619L516 628L518 638L512 647M550 604L555 605L558 611L563 613L566 618L572 619M550 604L546 613L547 624L548 634L541 643L541 653M572 619L579 617L587 617L593 613L602 617L609 612M572 619L578 623L575 629L578 634L577 640L579 645M609 612L617 613L625 618L635 612L643 619L652 621M609 612L612 616L606 622L614 626L616 630L613 636M652 621L662 619L669 614L676 607M652 621L649 624L645 627L652 634L649 637L646 640M676 607L683 615L693 618L704 620M676 607L674 615L675 624L670 632L670 641L672 649M704 620L713 617L722 615L729 609L738 608L747 607M704 620L702 623L699 627L698 631L702 636L701 640M747 607L753 610L760 604L766 609L772 611L778 609M747 607L750 618L747 629L745 639M778 609L784 608L791 610L797 606L804 606M804 606L817 610L830 615L843 621M804 606L807 622L799 636L798 651M-1 646L15 646L15 651L30 651M-1 646L-1 663L3 663L3 681M30 651L49 651L49 637L60 637M30 651L30 662L30 673L34 684M60 637L88 637L88 641L104 641M60 637L60 648L68 648L68 670M104 641L104 656L101 656L101 679M139 651L153 651L153 637L168 637M139 651L137 661L130 668L129 679M168 637L183 637L183 652L200 652M168 637L168 653L169 653L169 676M200 652L200 670L196 670L196 682M227 636L238 636L238 641L255 641M227 636L225 645L233 652L232 660L226 669L231 676M255 641L271 641L271 639L296 639M255 641L255 654L268 654L268 670M296 639L307 639L307 639L318 639M296 639L296 655L297 655L297 670M318 639L338 639L338 649L359 649M318 639L322 650L320 661L326 671M359 649L374 649L374 647L386 647M359 649L357 660L360 671L355 681M386 647L407 647L407 646L427 646M386 647L384 659L395 669L393 681M427 646L437 646L437 640L447 640M427 646L427 661L415 661L415 676M447 640L461 640L461 647L492 647M447 640L447 654L447 654L447 677M492 647L504 647L504 647L512 647M492 647L492 653L484 653L484 668M512 647L527 647L527 653L541 653M512 647L509 654L515 660L519 666L514 674L518 680M541 653L548 649L555 646L563 645L571 644L579 645M541 653L546 658L544 665L543 671L549 676L549 683M579 645L591 646L602 639L613 636M579 645L577 651L578 657L571 663L574 670M613 636L623 638L635 634L646 640M613 636L615 645L608 652L608 660L609 669L603 676M646 640L651 642L655 647L662 644L665 651L672 649M646 640L643 647L643 654L644 661L646 668L643 675M672 649L677 646L683 644L688 642L696 645L701 640M672 649L671 660L677 671L672 681M701 640L715 635L730 641L745 639M701 640L703 649L698 657L703 666L698 675L700 683M745 639L749 643L754 641L758 646L763 646L768 645M745 639L748 649L740 658L741 667L741 677M768 645L778 647L788 648L798 651M768 645L774 650L774 658L772 666L777 671M798 651L811 651L822 644L833 640L845 636M798 651L797 658L798 665L798 673M845 636L845 647L833 653L828 662L828 673M3 681L21 681L21 684L34 684M3 681L3 696L6 696L6 708M34 684L41 681L47 676L55 678L60 671L68 670M34 684L34 692L32 692L32 710M68 670L81 670L81 679L101 679M68 670L68 692L61 692L61 714M101 679L117 679L117 679L129 679M101 679L101 692L94 692L94 704M129 679L139 679L150 682L159 677L169 676M169 676L186 676L186 682L196 682M169 676L169 694L170 694L170 713M196 682L207 682L207 676L231 676M196 682L190 689L189 698L188 706M231 676L244 676L244 670L268 670M231 676L230 685L223 693L226 703M268 670L285 670L285 670L297 670M268 670L268 690L268 690L268 700M297 670L304 671L312 666L319 670L326 671M326 671L333 669L337 676L343 677L350 676L355 681M326 671L326 692L333 692L333 702M355 681L379 681L379 681L393 681M355 681L356 689L359 697L354 705L355 712M393 681L403 681L403 676L415 676M393 681L389 689L388 698L380 703M415 676L426 676L426 677L447 677M415 676L415 686L427 686L427 702M447 677L470 677L470 668L484 668M447 677L447 691L450 691L450 704M484 668L496 668L496 680L518 680M484 668L484 685L483 685L483 700M518 680L537 680L537 683L549 683M518 680L518 704L508 704L508 717M549 683L555 678L560 673L566 669L574 670M549 683L547 693L547 703L553 712M574 670L579 678L571 687L576 695L575 704M603 676L611 674L619 678L627 677L635 679L643 675M603 676L601 683L609 686L607 693L612 697L613 703M643 675L649 681L657 680L664 683L672 681M643 675L639 685L644 695L640 706L643 716M672 681L679 681L686 680L693 686L700 683M672 681L676 687L669 693L671 699L674 705M700 683L710 681L721 684L731 681L741 677M700 683L705 690L706 698L711 704L717 710M741 677L750 675L759 670L768 673L777 671M741 677L734 685L739 698L732 706M777 671L782 675L788 670L793 671L798 673M777 671L775 677L774 683L772 688L772 694L775 700M798 673L808 675L818 675L828 673M798 673L802 682L803 692L797 702L801 712M6 708L23 708L23 710L32 710M6 708L6 719L11 719L11 739M32 710L46 710L46 714L61 714M32 710L32 726L34 726L34 746M61 714L73 714L73 704L94 704M61 714L63 724L66 734L66 745M94 704L100 707L108 703L112 713L120 707L126 711M94 704L94 714L95 714L95 737M126 711L155 711L155 713L170 713M126 711L126 725L126 725L126 741M170 713L170 726L158 726L158 735M188 706L200 703L214 709L226 703M188 706L188 728L191 728L191 739M226 703L248 703L248 700L268 700M226 703L226 725L225 725L225 739M268 700L277 700L277 713L292 713M268 700L272 711L267 722L266 732L269 743M292 713L316 713L316 702L333 702M292 713L291 718L292 722L294 726L301 729L299 735M333 702L347 702L347 712L355 712M333 702L331 708L330 714L323 719L320 725L322 732M355 712L368 712L368 703L380 703M355 712L351 718L361 722L359 727L361 732L359 738M380 703L399 703L399 702L427 702M380 703L380 713L384 713L384 731M427 702L427 718L414 718L414 736M450 704L461 704L461 700L483 700M450 704L450 722L450 722L450 748M483 700L492 700L492 717L508 717M508 717L531 717L531 712L553 712M508 717L508 723L516 727L513 734M553 712L560 709L567 705L575 704M553 712L556 720L554 729L556 737M575 704L585 704L594 699L603 699L613 703M613 703L624 706L632 714L643 716M613 703L616 710L616 717L615 725L619 731M643 716L650 714L656 714L663 713L669 711L674 705M643 716L641 720L642 725L642 729L640 733L641 738M674 705L684 711L695 712L706 712L717 710M674 705L675 719L673 733L668 747M717 710L721 709L725 712L727 705L732 706M717 710L710 716L715 725L706 730L709 739L705 745M732 706L742 703L753 702L764 701L775 700M732 706L733 715L741 722L740 732M775 700L783 700L788 705L796 705L801 712M775 700L769 711L775 724L770 735M801 712L812 711L822 706L832 708L843 710M801 712L798 715L804 722L802 726L799 730L796 734M843 710L840 715L836 720L840 726L838 732M11 739L18 744L27 743L34 746M11 739L9 750L5 760L1 771M34 746L48 746L48 745L66 745M34 746L32 753L41 758L37 765M66 745L77 745L77 737L95 737M66 745L66 753L72 753L72 768M95 737L113 737L113 741L126 741M95 737L95 749L104 749L104 775M126 741L124 747L124 754L129 760L126 767M158 735L158 752L160 752L160 776M191 739L202 735L213 744L225 739M191 739L191 753L194 753L194 770M225 739L247 739L247 743L269 743M225 739L225 753L235 753L235 767M269 743L285 743L285 735L299 735M269 743L265 749L258 754L256 761L256 769M299 735L310 735L310 732L322 732M299 735L299 754L287 754L287 764M322 732L347 732L347 738L359 738M322 732L322 746L315 746L315 774M359 738L370 738L370 731L384 731M359 738L359 760L357 760L357 778M384 731L392 732L400 730L407 732L414 736M384 731L384 744L397 744L397 768M414 736L432 736L432 748L450 748M414 736L414 759L423 759L423 780M450 748L459 749L466 746L474 745L481 742L488 736M450 748L447 757L450 766L447 775M488 736L493 737L499 740L503 732L508 732L513 734M513 734L534 734L534 737L556 737M513 734L520 744L522 755L523 767M556 737L562 736L568 739L573 742L580 738L585 744M556 737L555 747L555 756L550 765M585 744L596 739L607 734L619 731M585 744L584 751L582 757L581 764L579 770M619 731L625 730L631 730L635 739L641 738M619 731L618 742L616 752L606 759L604 770M641 738L645 743L651 744L659 739L664 743L668 747M641 738L636 746L643 755L640 763L641 772M668 747L678 748L687 751L696 747L705 745M705 745L710 750L701 756L703 761L704 766L706 772M740 732L747 731L752 732L758 737L764 735L770 735M740 732L733 746L734 760L734 775M770 735L777 736L783 736L790 739L796 734M770 735L767 741L767 747L769 753L772 759L767 765M796 734L804 732L812 730L821 730L830 737L838 732M796 734L799 746L801 758L801 771M838 732L833 745L836 760L830 773M1 771L13 771L13 765L37 765M37 765L57 765L57 768L72 768M37 765L37 785L40 785L40 795M72 768L72 783L66 783L66 802M104 775L114 775L114 767L126 767M104 775L104 793L92 793L92 802M126 767L139 767L139 776L160 776M126 767L126 791L124 791L124 804M160 776L171 771L183 775L194 770M194 770L208 770L208 767L235 767M194 770L194 780L193 790L193 800M235 767L249 767L249 769L256 769M235 767L235 778L219 778L219 801M256 769L275 769L275 764L287 764M256 769L256 791L267 791L267 805M287 764L298 764L298 774L315 774M287 764L287 791L288 791L288 807M315 774L329 774L329 778L357 778M315 774L315 786L318 786L318 803M357 778L357 800L358 800L358 812M397 768L406 768L406 780L423 780M397 768L397 780L386 780L386 805M423 780L428 780L433 778L438 781L443 780L447 775M423 780L423 790L428 790L428 809M447 775L455 774L463 774L471 776L479 780L487 780M447 775L447 786L454 786L454 806M487 780L487 791L482 791L482 802M523 767L532 765L541 764L550 765M523 767L523 786L512 786L512 810M550 765L556 766L561 769L568 764L573 767L579 770M550 765L554 774L549 784L554 793L555 802M579 770L584 766L589 771L594 775L599 771L604 770M579 770L580 775L584 780L584 785L586 790L587 796M604 770L614 766L623 768L631 776L641 772M604 770L609 777L607 783L609 790L610 797L605 804M641 772L647 771L652 765L659 767L665 763L672 766M641 772L645 778L640 784L636 790L638 796L641 801M672 766L680 763L686 767L693 765L699 773L706 772M672 766L679 775L677 788L685 798M706 772L712 768L718 769L722 778L729 771L734 775M706 772L707 777L704 783L705 788L699 793L702 799M734 775L741 768L751 770L758 765L767 765M734 775L734 780L738 785L736 791L743 794L743 799M767 765L775 768L784 771L793 766L801 771M767 765L765 773L762 780L768 789L767 797L763 805M801 771L807 769L812 776L818 770L824 771L830 773M801 771L806 778L797 785L802 792L802 799M830 773L833 781L838 789L831 799L836 807M8 805L26 805L26 795L40 795M40 795L58 795L58 802L66 802M40 795L40 813L37 813L37 842M66 802L71 798L76 801L82 802L87 801L92 802M66 802L66 818L76 818L76 833M92 802L103 802L103 804L124 804M92 802L92 820L97 820L97 843M124 804L138 800L152 799L166 803M166 803L174 803L174 800L193 800M166 803L166 825L168 825L168 839M193 800L203 800L203 801L219 801M193 800L193 825L204 825L204 842M219 801L234 801L234 805L267 805M219 801L219 813L222 813L222 838M267 805L274 805L274 807L288 807M267 805L268 814L264 821L257 828L260 837M288 807L304 807L304 803L318 803M288 807L288 819L290 819L290 832M318 803L331 809L344 811L358 812M318 803L318 817L328 817L328 837M358 812L358 821L351 821L351 831M386 805L405 805L405 809L428 809M428 809L437 807L445 802L454 806M428 809L428 817L420 817L420 829M454 806L473 806L473 802L482 802M454 806L454 818L444 818L444 828M482 802L501 802L501 810L512 810M482 802L479 811L483 822L476 830L477 840M512 810L526 805L540 802L555 802M512 810L512 821L509 821L509 835M555 802L563 801L572 801L579 798L587 796M555 802L559 813L552 824L553 836M587 796L592 798L595 804L603 798L605 804M587 796L581 804L580 814L580 824L572 832L574 843M605 804L612 803L620 804L626 801L634 805L641 801M605 804L610 809L613 815L614 823L619 828M641 801L643 808L645 815L644 822L644 829L640 836M685 798L690 802L697 798L702 799M685 798L680 809L684 822L681 834M702 799L713 798L723 799L733 801L743 799M702 799L707 807L705 816L705 825L712 832M743 799L750 801L755 806L763 805M743 799L738 811L742 822L744 833M763 805L777 807L788 796L802 799M763 805L765 812L770 818L768 826L766 834L769 841M802 799L811 797L818 807L828 803L836 807M802 799L802 808L804 817L806 825L813 833L810 842M836 807L834 816L841 825L837 835M5 838L25 838L25 842L37 842M37 842L54 842L54 833L76 833M76 833L81 836L86 839L90 845L97 843M97 843L110 843L110 840L129 840M129 840L143 840L143 839L168 839M168 839L181 839L181 842L204 842M204 842L212 842L212 838L222 838M260 837L272 837L272 832L290 832M290 832L305 832L305 837L328 837M328 837L340 837L340 831L351 831M351 831L363 833L373 826L385 830M385 830L399 830L399 829L420 829M420 829L430 829L430 828L444 828M444 828L456 830L466 835L477 840M477 840L492 840L492 835L509 835M509 835L535 835L535 836L553 836M553 836L558 834L562 836L564 844L570 842L574 843M574 843L587 834L602 828L619 828M619 828L624 829L629 832L633 838L640 836M640 836L650 840L660 831L671 838L681 834M681 834L692 835L702 833L712 832M712 832L723 831L733 832L744 833M769 841L777 838L786 838L794 845L802 843L810 842M810 842L820 844L828 837L837 835"/>
</g>
<path d="M6.0 806.0 L6.0 704.6 L19.7 699.7 L29.5 699.0 L28.0 708.0 L46.4 705.3 L45.0 715.0 L50.6 725.0 L60.5 725.0 L70.3 727.8 L76.0 736.0 L78.8 742.0 L73.0 746.0 L81.6 751.7 L90.0 742.0 L98.5 747.5 L107.0 753.0 L115.3 749.0 L122.0 743.0 L130.8 742.0 L140.6 746.0 L147.7 751.7 L158.0 746.0 L170.0 744.0 L185.0 742.0 L193.6 738.0 L206.0 744.0 L218.0 751.0 L228.0 759.0 L241.0 759.0 L236.0 749.8 L227.0 741.0 L213.0 734.0 L209.0 723.0 L218.0 711.0 L228.7 690.0 L227.6 669.6 L218.7 672.5 L206.9 677.0 L201.0 684.4 L199.5 690.3 L195.0 694.7 L189.0 693.2 L186.2 688.8 L178.8 687.3 L177.3 682.9 L181.7 679.2 L189.0 675.5 L195.0 668.0 L201.0 666.6 L206.9 662.2 L212.8 657.7 L214.3 651.8 L218.7 651.0 L220.2 654.8 L233.5 648.9 L242.4 645.9 L252.7 645.9 L255.7 648.0 L270.0 651.8 L282.0 653.0 L290.6 648.0 L299.0 651.6 L306.0 652.0 L305.5 645.0 L307.2 638.0 L305.5 632.8 L306.4 627.6 L312.5 622.3 L319.5 625.0 L321.3 641.6 L327.5 648.7 L332.7 657.5 L340.0 660.5 L350.3 659.2 L376.7 652.2 L403.0 647.8 L429.4 647.8 L455.7 652.2 L467.0 658.0 L478.0 667.0 L492.0 677.0 L503.7 687.0 L509.6 696.6 L511.6 710.0 L517.5 711.0 L531.0 712.0 L535.0 718.0 L547.0 710.0 L561.0 703.5 L578.0 693.0 L580.0 684.5 L588.7 680.0 L597.0 673.0 L610.0 675.0 L624.7 684.5 L639.6 695.0 L646.0 705.7 L656.5 714.0 L658.6 727.0 L671.0 737.5 L680.0 750.0 L684.0 758.6 L701.0 765.0 L707.0 784.0 L716.0 792.5 L720.0 806.0Z" fill="#004466" stroke="#000" stroke-width="1.2"/>
<path d="M15.5 720.0 L22.0 716.0 L30.0 717.0 L36.0 720.0 L39.4 722.0 L34.0 727.0 L28.0 729.0 L20.0 724.0Z" fill="#5c504c" stroke="#000" stroke-width="1"/>
<path d="M343.3 652.0 L350.3 650.4 L357.3 645.0 L360.8 643.4 L362.6 652.0 L367.9 654.0 L355.0 655.0Z" fill="#004466" stroke="#000" stroke-width="0.8"/>
<path d="M364.4 652.0 L375.0 643.4 L376.7 632.8 L382.0 636.4 L385.4 632.8 L389.0 640.0 L397.8 643.4 L385.4 647.0 L371.4 654.0Z" fill="#004466" stroke="#000" stroke-width="0.8"/>
<path d="M418.8 643.4 L429.4 638.0 L438.2 643.4 L448.7 640.0 L454.0 645.0 L447.0 647.8 L429.4 647.0 L418.8 645.5Z" fill="#004466" stroke="#000" stroke-width="0.8"/>
<path d="M474.0 658.0 L476.0 653.0 L481.0 654.0 L486.0 658.0 L490.0 660.0 L495.0 654.0 L498.0 660.0 L502.0 666.0 L507.0 672.0 L506.0 682.0 L500.0 680.0 L490.0 672.0 L482.0 664.0Z" fill="#004466" stroke="#000" stroke-width="0.8"/>
<g shape-rendering="crispEdges">
<path fill="#004466" d="M226 745h3v1h-3zM212 681h1v1h-1zM201 695h1v3h-1zM208 695h2v2h-2zM211 689h3v2h-3zM213 704h1v1h-1zM228 748h2v2h-2zM228 686h2v2h-2zM227 679h1v2h-1zM212 685h1v2h-1zM209 722h1v1h-1zM209 729h1v1h-1zM221 677h1v1h-1zM208 734h1v3h-1zM204 697h3v2h-3zM210 728h2v2h-2zM208 730h2v1h-2zM205 703h2v1h-2zM223 743h2v2h-2zM222 674h1v2h-1zM201 725h1v1h-1zM213 705h2v1h-2zM199 702h2v1h-2zM219 701h1v3h-1zM212 696h1v2h-1zM208 699h1v3h-1zM210 697h1v2h-1zM199 708h1v3h-1zM201 732h3v2h-3zM224 741h1v2h-1zM212 691h2v2h-2zM203 689h3v1h-3zM197 710h1v2h-1zM208 682h2v2h-2zM201 733h2v3h-2zM198 706h3v2h-3zM205 699h1v3h-1zM207 738h2v2h-2zM196 716h1v3h-1zM197 713h2v1h-2zM213 693h1v1h-1zM229 749h1v1h-1zM215 686h2v1h-2zM202 714h2v1h-2zM227 688h2v1h-2zM198 697h1v2h-1zM207 699h1v1h-1zM210 689h2v1h-2zM221 678h2v1h-2zM218 688h2v2h-2zM230 749h3v1h-3zM216 690h2v1h-2zM204 723h3v2h-3zM201 695h1v2h-1zM221 743h3v1h-3zM224 745h1v2h-1zM199 730h3v1h-3zM227 693h3v2h-3zM219 738h1v2h-1zM220 681h1v2h-1zM215 676h2v2h-2zM207 717h3v1h-3zM212 738h1v2h-1zM204 684h1v2h-1zM211 700h3v1h-3zM225 671h2v2h-2zM229 688h2v2h-2zM200 723h3v2h-3zM208 732h2v2h-2zM225 697h2v1h-2zM206 695h2v1h-2zM209 703h1v2h-1zM219 709h1v1h-1zM223 686h2v2h-2zM201 730h1v2h-1zM220 697h2v2h-2zM212 689h1v2h-1zM203 724h2v1h-2zM218 708h2v3h-2zM215 714h2v2h-2zM216 714h3v2h-3zM220 708h2v2h-2zM220 674h3v3h-3zM232 747h2v2h-2zM217 678h2v1h-2zM198 726h1v2h-1zM216 688h1v2h-1zM206 715h1v3h-1zM222 696h1v3h-1zM202 730h1v3h-1zM204 695h1v2h-1zM206 717h3v3h-3zM197 725h3v1h-3zM208 696h2v3h-2zM209 731h1v2h-1zM224 674h3v2h-3zM199 697h2v3h-2zM216 691h3v1h-3zM211 716h2v1h-2zM216 736h1v2h-1zM208 707h2v3h-2zM199 726h2v1h-2zM205 698h3v2h-3zM218 690h1v3h-1zM226 676h3v1h-3zM222 699h3v1h-3zM208 708h2v1h-2zM206 737h1v3h-1zM224 680h2v1h-2zM209 699h1v3h-1zM216 682h2v1h-2zM223 685h2v3h-2zM198 697h2v2h-2zM205 736h2v3h-2zM213 680h1v1h-1zM219 701h3v1h-3zM207 693h1v1h-1zM219 678h3v2h-3zM203 689h1v1h-1zM200 729h3v2h-3zM216 676h1v1h-1zM208 721h3v2h-3zM211 711h1v2h-1zM200 694h1v1h-1zM214 705h2v2h-2zM215 683h2v2h-2zM203 705h3v1h-3zM223 748h3v2h-3zM219 700h1v3h-1zM203 702h1v1h-1zM209 718h2v3h-2zM215 695h1v1h-1zM206 684h2v3h-2zM222 695h1v1h-1zM205 717h1v1h-1zM213 712h1v1h-1zM178 714h1v2h-1zM188 727h1v1h-1zM189 729h2v1h-2zM167 739h2v1h-2zM164 736h3v1h-3zM165 725h2v2h-2zM158 722h1v1h-1zM185 729h1v2h-1zM181 723h2v2h-2zM148 748h3v1h-3zM154 712h1v3h-1zM149 738h2v1h-2zM180 736h1v2h-1zM168 742h2v2h-2zM155 739h1v2h-1zM172 715h1v2h-1zM162 714h2v3h-2zM154 726h1v1h-1zM181 739h3v2h-3zM144 732h2v1h-2zM191 733h1v1h-1zM147 723h1v3h-1zM178 721h3v1h-3zM188 738h2v2h-2zM146 740h3v2h-3zM182 740h2v3h-2zM157 736h1v1h-1zM175 724h1v2h-1zM169 736h3v2h-3zM156 726h1v3h-1zM170 743h1v2h-1zM172 713h2v1h-2zM155 719h1v2h-1zM180 727h2v2h-2zM155 716h1v1h-1zM163 740h2v2h-2zM181 725h1v1h-1zM182 732h2v2h-2zM151 724h2v2h-2zM145 728h1v2h-1zM153 713h2v2h-2zM181 732h1v1h-1zM155 729h1v2h-1zM158 730h3v3h-3zM165 742h1v3h-1zM174 715h3v1h-3zM183 742h2v1h-2zM148 734h1v2h-1zM156 726h2v3h-2zM150 713h2v2h-2zM153 730h1v2h-1zM149 729h1v3h-1zM167 739h1v3h-1zM179 738h3v1h-3zM186 726h3v1h-3zM171 738h2v1h-2zM152 719h1v3h-1zM153 724h2v1h-2zM186 727h3v2h-3zM185 738h1v3h-1zM147 730h3v2h-3zM172 733h1v1h-1zM167 716h2v1h-2zM160 744h2v1h-2zM175 716h1v2h-1zM172 741h2v1h-2zM148 743h1v1h-1zM152 712h3v2h-3zM172 742h3v2h-3zM166 713h2v3h-2zM175 715h3v1h-3zM163 714h1v1h-1zM145 718h1v1h-1zM166 723h3v2h-3zM172 741h3v3h-3zM177 725h2v2h-2zM166 714h2v1h-2zM143 734h2v1h-2zM183 729h2v1h-2zM180 719h2v3h-2zM161 732h3v1h-3zM187 727h3v1h-3zM173 727h1v1h-1zM170 734h1v2h-1zM180 718h1v2h-1zM146 713h1v3h-1zM167 722h1v3h-1zM180 723h2v2h-2zM180 741h2v3h-2zM166 731h2v1h-2zM173 739h1v1h-1zM176 737h2v3h-2zM166 731h1v2h-1zM165 728h1v1h-1zM153 735h2v1h-2zM161 733h1v2h-1zM159 735h1v1h-1zM169 734h1v3h-1zM176 736h1v3h-1zM73 741h1v2h-1zM87 758h2v1h-2zM133 754h3v2h-3zM99 758h3v3h-3zM132 748h2v2h-2zM76 740h2v2h-2zM144 752h1v3h-1zM101 746h1v1h-1zM119 743h3v1h-3zM93 748h2v2h-2zM70 747h2v3h-2zM111 741h2v2h-2zM104 751h1v2h-1zM147 753h2v2h-2zM90 752h1v1h-1zM111 744h1v2h-1zM74 746h3v2h-3zM94 748h3v2h-3zM69 744h3v2h-3zM107 748h1v1h-1zM126 745h2v3h-2zM135 749h3v3h-3zM94 746h1v3h-1zM134 744h2v2h-2zM81 750h1v1h-1zM86 755h3v1h-3zM135 749h2v1h-2zM125 752h3v2h-3zM118 740h1v1h-1zM104 751h1v3h-1zM89 745h2v1h-2zM73 757h1v2h-1zM129 750h2v2h-2zM109 745h2v1h-2zM129 745h3v3h-3zM95 753h2v1h-2zM95 757h1v2h-1zM109 742h2v1h-2zM141 751h2v2h-2zM85 755h2v2h-2zM100 745h1v1h-1zM136 755h1v3h-1zM112 743h3v1h-3zM800 578h4v2h-4zM806 657h2v1h-2zM805 600h3v2h-3zM787 656h5v1h-5zM801 638h2v1h-2zM803 566h2v1h-2zM788 645h4v1h-4zM802 616h5v1h-5zM802 629h2v1h-2zM803 637h2v2h-2zM794 630h5v1h-5zM804 630h3v1h-3zM797 567h2v1h-2zM797 656h3v1h-3zM796 633h2v2h-2zM799 638h3v2h-3zM794 639h4v2h-4zM804 644h5v2h-5zM805 628h4v2h-4zM795 577h2v1h-2zM805 632h3v2h-3zM789 632h5v1h-5zM791 634h2v2h-2zM804 608h4v1h-4zM802 576h5v2h-5zM802 608h5v1h-5zM802 590h3v1h-3zM802 616h5v2h-5zM795 629h3v1h-3zM802 562h4v1h-4zM793 660h4v1h-4zM803 619h2v1h-2zM797 621h4v2h-4zM799 592h4v1h-4zM796 582h4v1h-4zM803 634h4v1h-4zM797 578h3v2h-3zM795 650h3v1h-3zM792 624h4v1h-4zM801 562h3v2h-3zM800 629h4v1h-4zM795 644h2v2h-2zM796 616h3v1h-3zM803 623h3v2h-3zM796 574h3v2h-3zM805 615h5v1h-5zM798 617h4v2h-4zM793 645h4v1h-4zM803 569h3v2h-3zM800 641h2v1h-2zM795 583h5v2h-5zM805 659h4v2h-4zM803 566h2v1h-2zM801 661h5v1h-5zM799 656h4v1h-4zM702 780h1v2h-1zM674 744h1v1h-1zM681 757h2v1h-2zM676 747h2v2h-2zM701 785h3v2h-3zM697 773h1v1h-1zM692 762h1v2h-1z"/>
<path fill="#000" d="M225 690h1v1h-1zM213 690h3v1h-3zM225 683h1v1h-1zM219 685h1v2h-1zM209 683h1v2h-1zM207 718h1v3h-1zM202 708h1v1h-1zM209 702h3v2h-3zM224 744h2v2h-2zM213 717h2v2h-2zM208 719h1v2h-1zM222 677h2v2h-2zM208 687h3v1h-3zM226 679h2v2h-2zM216 684h2v2h-2zM214 711h3v3h-3zM225 699h2v2h-2zM208 692h2v3h-2zM216 683h2v2h-2zM198 724h2v1h-2zM217 739h2v1h-2zM216 703h2v2h-2zM206 698h1v2h-1zM217 713h2v1h-2zM210 708h1v1h-1zM200 720h3v2h-3zM210 738h1v3h-1zM224 694h2v2h-2zM210 708h3v2h-3zM214 738h2v2h-2zM200 693h2v3h-2zM216 707h2v3h-2zM222 679h3v1h-3zM220 709h2v2h-2zM206 732h2v1h-2zM222 741h2v3h-2zM222 674h1v1h-1zM224 692h3v3h-3zM211 720h1v2h-1zM205 714h2v2h-2zM215 706h2v2h-2zM227 681h3v2h-3zM212 738h3v1h-3zM210 678h1v1h-1zM212 707h1v1h-1zM201 700h2v2h-2zM205 692h1v2h-1zM221 693h1v1h-1zM222 685h2v2h-2zM225 684h1v1h-1zM197 714h3v3h-3zM202 689h2v1h-2zM198 728h3v1h-3zM209 704h2v3h-2zM200 709h2v2h-2zM212 716h1v2h-1zM205 735h2v3h-2zM205 724h2v1h-2zM200 699h2v3h-2zM216 680h1v2h-1zM201 720h1v1h-1zM201 731h2v2h-2zM218 709h2v2h-2zM203 736h2v3h-2zM209 735h1v3h-1zM209 681h1v2h-1zM213 713h1v1h-1zM195 711h3v3h-3zM210 695h1v3h-1zM227 744h3v1h-3zM215 693h1v1h-1zM207 698h3v3h-3zM214 677h1v1h-1zM199 694h2v3h-2zM211 685h1v3h-1zM212 712h1v2h-1zM208 704h1v1h-1zM197 709h3v1h-3zM214 678h1v1h-1zM231 747h1v2h-1zM210 707h1v1h-1zM224 686h2v2h-2zM225 677h1v2h-1zM212 688h1v2h-1zM228 690h2v2h-2zM196 715h2v3h-2zM218 737h2v3h-2zM211 692h2v2h-2zM221 680h1v2h-1zM222 673h2v1h-2zM201 711h3v1h-3zM216 705h1v3h-1zM210 689h1v1h-1zM212 678h1v2h-1zM207 683h1v2h-1zM203 720h1v3h-1zM217 736h1v2h-1zM214 715h1v3h-1zM214 682h1v2h-1zM212 742h1v3h-1zM197 729h3v1h-3zM214 740h1v1h-1zM200 728h3v2h-3zM222 677h1v2h-1zM215 713h1v2h-1zM224 691h2v2h-2zM212 720h2v1h-2zM203 689h1v2h-1zM205 695h3v1h-3zM212 738h3v2h-3zM223 677h1v1h-1zM199 721h3v1h-3zM205 703h2v1h-2zM206 697h2v1h-2zM199 729h3v2h-3zM211 688h1v3h-1zM208 699h1v2h-1zM202 690h3v3h-3zM210 679h2v3h-2zM227 673h3v1h-3zM220 743h2v3h-2zM207 738h2v2h-2zM215 693h2v2h-2zM201 726h1v2h-1zM200 731h2v3h-2zM206 697h2v1h-2zM206 700h1v2h-1zM218 707h3v3h-3zM211 678h2v1h-2zM218 688h1v2h-1zM213 685h1v1h-1zM219 743h3v1h-3zM203 713h1v1h-1zM207 728h2v2h-2zM222 687h2v2h-2zM221 741h2v1h-2zM229 674h3v1h-3zM199 718h2v1h-2zM223 741h2v1h-2zM209 741h2v3h-2zM216 684h2v3h-2zM198 713h1v1h-1zM218 678h2v2h-2zM209 732h1v2h-1zM225 744h1v1h-1zM215 708h2v2h-2zM206 706h1v3h-1zM213 678h2v2h-2zM213 741h3v2h-3zM199 711h2v2h-2zM219 702h2v1h-2zM212 740h2v2h-2zM207 715h3v1h-3zM198 720h2v2h-2zM196 707h1v2h-1zM210 707h2v1h-2zM214 696h3v1h-3zM226 745h1v2h-1zM213 691h1v3h-1zM211 690h3v1h-3zM219 706h2v2h-2zM205 710h3v3h-3zM199 714h1v2h-1zM209 738h1v1h-1zM225 679h2v1h-2zM226 690h1v2h-1zM213 689h1v3h-1zM224 744h2v2h-2zM209 691h1v3h-1zM218 688h1v3h-1zM204 686h3v1h-3zM223 687h1v1h-1zM213 714h1v2h-1zM219 697h1v2h-1zM219 737h2v1h-2zM201 702h2v1h-2zM207 679h1v1h-1zM210 735h1v2h-1zM197 710h2v2h-2zM222 688h3v3h-3zM211 708h1v2h-1zM204 689h1v1h-1zM229 682h2v3h-2zM208 688h1v2h-1zM208 732h3v2h-3zM214 696h2v1h-2zM217 690h3v3h-3zM197 723h1v1h-1zM217 694h1v2h-1zM215 706h2v2h-2zM215 676h2v1h-2zM215 699h1v1h-1zM219 703h2v2h-2zM205 688h2v2h-2zM205 719h3v3h-3zM223 674h2v1h-2zM197 704h3v1h-3zM215 685h2v2h-2zM201 699h1v2h-1zM209 733h1v2h-1zM210 691h2v1h-2zM209 702h3v1h-3zM207 688h1v2h-1zM208 688h1v2h-1zM198 710h2v1h-2zM219 710h2v1h-2zM226 744h3v3h-3zM222 686h2v1h-2zM196 718h2v3h-2zM228 749h3v1h-3zM217 679h1v1h-1zM224 678h3v1h-3zM218 694h1v1h-1zM219 743h3v2h-3zM218 707h2v2h-2zM204 736h2v2h-2zM223 745h1v1h-1zM200 696h2v1h-2zM210 680h1v1h-1zM205 728h3v2h-3zM218 682h1v2h-1zM210 691h2v2h-2zM219 738h1v2h-1zM204 685h1v1h-1zM224 745h1v1h-1zM205 686h3v2h-3zM212 683h1v2h-1zM226 748h2v1h-2zM200 729h2v2h-2zM203 723h1v1h-1zM208 736h3v2h-3zM219 691h3v2h-3zM200 693h2v2h-2zM209 737h3v1h-3zM201 698h2v3h-2zM222 676h2v1h-2zM196 710h1v2h-1zM204 720h3v1h-3zM213 703h2v3h-2zM216 715h2v1h-2zM222 684h2v2h-2zM223 748h2v3h-2zM201 729h2v3h-2zM225 749h1v2h-1zM220 675h1v2h-1zM222 699h2v1h-2zM223 692h1v1h-1zM207 690h1v1h-1zM228 692h3v3h-3zM219 700h2v1h-2zM203 712h1v2h-1zM212 737h1v3h-1zM223 699h2v3h-2zM205 694h2v1h-2zM215 704h1v1h-1zM224 697h1v3h-1zM207 701h2v1h-2zM217 737h2v2h-2zM204 696h2v3h-2zM218 694h2v1h-2zM202 722h2v3h-2zM211 690h3v3h-3zM222 740h2v1h-2zM207 705h1v1h-1zM209 696h1v1h-1zM232 748h2v1h-2zM222 699h2v2h-2zM208 720h1v1h-1zM202 703h3v2h-3zM229 683h2v1h-2zM203 708h2v2h-2zM215 702h3v2h-3zM221 700h1v1h-1zM211 678h3v2h-3zM226 685h2v1h-2zM209 721h1v3h-1zM215 698h1v1h-1zM201 732h2v2h-2zM202 690h1v1h-1zM223 675h2v3h-2zM197 701h1v1h-1zM219 704h3v2h-3zM225 675h1v3h-1zM218 679h3v1h-3zM219 677h1v2h-1zM229 745h2v2h-2zM217 692h2v1h-2zM208 737h1v1h-1zM209 733h3v2h-3zM203 699h1v1h-1zM198 697h2v1h-2zM202 694h1v1h-1zM225 690h1v2h-1zM205 734h2v3h-2zM216 739h1v1h-1zM204 733h1v3h-1zM216 697h3v1h-3zM209 708h2v3h-2zM211 690h1v1h-1zM209 708h1v2h-1zM226 679h1v1h-1zM213 705h1v2h-1zM213 737h1v2h-1zM202 713h2v1h-2zM219 740h2v1h-2zM202 715h1v3h-1zM212 702h1v3h-1zM204 686h2v2h-2zM207 728h1v1h-1zM220 678h3v1h-3zM223 744h3v3h-3zM208 684h1v2h-1zM200 719h1v2h-1zM225 745h3v2h-3zM211 733h2v1h-2zM210 729h1v2h-1zM218 678h1v1h-1zM222 690h3v1h-3zM199 698h1v3h-1zM204 698h2v1h-2zM226 750h1v3h-1zM208 737h2v1h-2zM207 722h2v1h-2zM198 699h1v2h-1zM214 686h2v3h-2zM232 749h1v1h-1zM216 711h1v1h-1zM196 709h2v1h-2zM217 706h1v3h-1zM207 727h1v3h-1zM222 684h3v2h-3zM202 720h2v3h-2zM215 690h2v1h-2zM206 737h3v2h-3zM196 704h1v1h-1zM208 705h1v2h-1zM219 696h2v1h-2zM208 729h3v1h-3zM203 711h2v1h-2zM210 727h2v3h-2zM209 731h3v3h-3zM224 684h2v2h-2zM209 681h3v2h-3zM218 705h3v1h-3zM215 679h1v3h-1zM207 712h2v1h-2zM220 698h1v2h-1zM203 691h1v1h-1zM197 722h2v1h-2zM205 698h1v3h-1zM222 688h1v1h-1zM199 701h3v2h-3zM213 676h2v2h-2zM225 685h1v1h-1zM218 737h1v3h-1zM208 714h2v3h-2zM199 711h1v3h-1zM217 684h2v1h-2zM228 672h1v1h-1zM208 697h3v2h-3zM212 708h3v1h-3zM222 672h1v3h-1zM206 684h1v1h-1zM216 739h2v2h-2zM214 713h1v3h-1zM206 684h1v3h-1zM226 676h1v1h-1zM210 721h1v1h-1zM199 701h1v2h-1zM216 685h3v2h-3zM207 701h1v2h-1zM230 749h3v2h-3zM207 741h3v1h-3zM196 720h2v1h-2zM199 693h2v1h-2zM203 711h1v1h-1zM211 738h2v1h-2zM226 749h1v2h-1zM202 729h1v1h-1zM212 683h1v2h-1zM206 726h1v1h-1zM217 740h2v1h-2zM217 737h3v1h-3zM219 691h1v1h-1zM216 743h3v1h-3zM211 707h2v2h-2zM202 721h2v1h-2zM219 686h2v2h-2zM219 710h2v2h-2zM217 700h2v2h-2zM220 678h1v1h-1zM213 676h1v2h-1zM203 721h1v3h-1zM214 696h1v1h-1zM220 741h2v1h-2zM229 746h1v1h-1zM208 734h1v1h-1zM205 732h3v3h-3zM226 743h2v2h-2zM198 706h3v3h-3zM223 687h2v1h-2zM228 747h2v1h-2zM212 688h2v2h-2zM210 704h1v1h-1zM210 736h2v1h-2zM221 687h3v2h-3zM211 720h1v2h-1zM225 677h2v3h-2zM222 691h2v3h-2zM208 715h1v2h-1zM224 692h3v2h-3zM211 727h2v2h-2zM220 742h2v2h-2zM219 710h1v1h-1zM205 693h3v3h-3zM204 700h1v3h-1zM226 693h3v2h-3zM202 693h2v2h-2zM218 708h1v1h-1zM231 749h1v3h-1zM218 683h2v1h-2zM215 741h3v1h-3zM224 676h2v2h-2zM205 739h3v1h-3zM216 736h2v2h-2zM208 689h2v3h-2zM213 705h2v2h-2zM224 681h1v1h-1zM215 683h3v2h-3zM231 749h1v1h-1zM214 738h1v2h-1zM228 673h1v2h-1zM223 699h2v1h-2zM226 676h3v1h-3zM196 721h2v1h-2zM218 677h2v1h-2zM207 735h2v2h-2zM198 702h3v1h-3zM229 749h1v3h-1zM227 674h3v1h-3zM201 727h2v3h-2zM212 684h2v1h-2zM197 712h2v2h-2zM218 688h2v1h-2zM213 697h1v3h-1zM208 731h2v2h-2zM227 691h1v2h-1zM217 686h3v2h-3zM223 743h2v1h-2zM222 682h2v1h-2zM217 744h1v3h-1zM155 736h1v2h-1zM174 731h3v2h-3zM170 719h1v1h-1zM177 725h3v2h-3zM179 735h2v1h-2zM181 726h3v1h-3zM155 740h1v3h-1zM180 739h3v3h-3zM150 722h3v1h-3zM162 713h2v2h-2zM160 735h3v3h-3zM157 736h1v2h-1zM160 744h1v1h-1zM172 727h1v1h-1zM179 740h1v2h-1zM164 724h1v2h-1zM166 729h2v3h-2zM172 718h2v3h-2zM168 730h2v2h-2zM151 733h1v3h-1zM176 725h2v2h-2zM154 722h3v2h-3zM165 736h2v1h-2zM157 722h1v3h-1zM174 725h1v3h-1zM155 736h2v1h-2zM177 720h1v2h-1zM182 732h1v1h-1zM147 721h3v3h-3zM160 713h3v2h-3zM146 736h2v1h-2zM164 718h1v2h-1zM143 728h2v1h-2zM189 738h1v2h-1zM154 724h2v2h-2zM162 717h1v3h-1zM157 742h1v2h-1zM146 741h1v1h-1zM158 724h1v1h-1zM186 728h1v2h-1zM186 732h1v3h-1zM159 742h1v2h-1zM146 720h2v2h-2zM149 713h1v2h-1zM147 734h2v2h-2zM152 745h1v1h-1zM170 738h3v2h-3zM172 733h2v1h-2zM154 719h2v2h-2zM168 729h3v2h-3zM156 717h2v3h-2zM180 730h1v1h-1zM170 717h2v1h-2zM160 740h2v2h-2zM156 725h3v1h-3zM175 716h2v1h-2zM177 734h1v1h-1zM166 734h1v2h-1zM153 733h3v1h-3zM175 736h3v1h-3zM152 725h2v2h-2zM145 739h1v2h-1zM155 726h3v3h-3zM170 743h1v2h-1zM164 743h3v1h-3zM156 732h3v1h-3zM181 724h2v2h-2zM164 743h3v3h-3zM158 723h2v3h-2zM184 734h2v2h-2zM153 736h1v2h-1zM162 719h2v2h-2zM152 736h1v2h-1zM147 743h1v1h-1zM175 742h3v2h-3zM178 724h1v1h-1zM157 713h1v2h-1zM159 724h2v1h-2zM176 722h1v1h-1zM156 739h2v2h-2zM183 742h3v3h-3zM149 727h3v1h-3zM172 730h2v1h-2zM74 749h2v2h-2zM108 748h1v1h-1zM82 741h1v2h-1zM120 746h2v3h-2zM121 753h3v1h-3zM138 749h2v2h-2zM73 739h3v2h-3zM111 754h1v1h-1zM123 756h2v2h-2zM142 754h3v2h-3zM102 748h1v3h-1zM123 746h2v2h-2zM77 743h2v2h-2zM142 750h3v1h-3zM124 745h2v1h-2zM67 743h1v1h-1zM117 758h1v3h-1zM113 752h3v1h-3zM139 746h2v1h-2zM144 755h2v2h-2zM85 754h2v1h-2zM108 746h2v2h-2zM73 741h1v1h-1zM117 756h2v1h-2zM145 748h2v1h-2zM131 749h2v2h-2zM77 753h1v1h-1zM79 744h2v2h-2zM72 751h2v3h-2zM74 738h1v2h-1zM128 741h2v1h-2zM81 749h2v1h-2zM118 748h2v3h-2zM101 757h3v2h-3zM112 752h3v2h-3zM82 741h1v2h-1zM70 752h1v2h-1zM144 747h3v1h-3zM121 746h1v1h-1zM101 744h3v1h-3zM94 742h1v2h-1zM125 746h1v1h-1zM85 743h1v2h-1zM140 745h1v3h-1zM76 740h3v2h-3zM81 748h2v2h-2zM80 738h1v1h-1zM112 748h3v2h-3zM140 756h2v1h-2zM99 752h1v3h-1zM117 740h3v2h-3zM82 750h1v3h-1zM100 746h3v2h-3zM82 747h2v3h-2zM120 756h2v1h-2zM72 751h2v1h-2zM103 743h3v1h-3zM133 751h1v2h-1zM68 744h1v3h-1zM123 748h2v2h-2zM95 747h2v3h-2zM108 752h2v1h-2zM89 742h1v2h-1zM137 755h2v2h-2zM120 757h2v2h-2zM104 755h1v2h-1zM119 744h3v2h-3zM105 756h1v1h-1zM95 753h1v1h-1zM71 758h1v1h-1zM86 752h2v1h-2zM87 755h1v1h-1zM93 741h2v1h-2zM113 754h1v2h-1zM130 741h3v1h-3zM95 742h3v2h-3zM71 741h2v2h-2zM105 747h1v2h-1zM96 752h2v1h-2zM75 744h2v1h-2zM135 750h2v1h-2zM133 747h1v1h-1zM145 750h3v1h-3zM91 750h1v2h-1zM89 758h2v1h-2zM111 757h3v1h-3zM136 750h2v2h-2zM795 641h3v2h-3zM803 558h3v2h-3zM805 657h4v2h-4zM797 609h3v1h-3zM795 623h5v2h-5zM795 601h4v1h-4zM803 584h5v2h-5zM803 632h3v2h-3zM793 603h3v2h-3zM799 649h5v1h-5zM802 595h4v1h-4zM792 646h4v1h-4zM794 647h3v2h-3zM802 623h4v1h-4zM804 610h4v1h-4zM795 656h5v1h-5zM794 582h5v1h-5zM796 651h5v1h-5zM794 633h4v1h-4zM790 638h3v2h-3zM795 654h5v1h-5zM799 570h3v2h-3zM805 593h4v1h-4zM797 653h2v1h-2zM791 635h4v1h-4zM805 574h2v2h-2zM793 636h4v1h-4zM798 624h3v1h-3zM792 598h4v2h-4zM800 623h5v2h-5zM796 597h4v1h-4zM802 620h4v1h-4zM804 559h2v1h-2zM793 626h3v1h-3zM797 616h4v2h-4zM795 582h5v2h-5zM799 655h5v1h-5zM788 661h3v1h-3zM794 593h5v2h-5zM794 653h2v1h-2zM800 586h4v1h-4zM790 635h2v2h-2zM791 648h3v1h-3zM804 597h5v2h-5zM794 616h3v1h-3zM789 630h2v1h-2zM803 562h3v1h-3zM803 611h2v2h-2zM793 639h4v2h-4zM794 596h4v1h-4zM796 610h5v1h-5zM793 660h5v2h-5zM787 642h4v1h-4zM799 600h5v1h-5zM806 631h5v1h-5zM800 641h3v1h-3zM799 650h2v1h-2zM796 598h2v1h-2zM799 623h2v1h-2zM797 593h4v1h-4zM803 567h3v2h-3zM804 561h5v2h-5zM792 654h5v1h-5zM795 597h3v1h-3zM799 646h4v1h-4zM803 564h3v2h-3zM799 631h4v1h-4zM796 641h3v2h-3zM802 604h3v1h-3zM797 582h4v1h-4zM805 606h3v1h-3zM800 589h5v2h-5zM787 648h2v1h-2zM803 632h4v1h-4zM803 565h3v1h-3zM804 651h4v1h-4zM798 565h5v1h-5zM790 610h5v1h-5zM798 589h3v1h-3zM788 639h3v1h-3zM802 595h5v2h-5zM806 559h3v1h-3zM794 601h4v1h-4zM802 622h2v1h-2zM797 614h2v1h-2zM791 630h2v1h-2zM802 575h2v2h-2zM794 592h2v1h-2zM804 627h2v1h-2zM800 618h2v1h-2zM805 649h3v2h-3zM797 585h4v1h-4zM800 597h3v2h-3zM793 628h5v1h-5zM805 558h5v1h-5zM795 598h4v2h-4zM805 585h2v1h-2zM802 584h3v2h-3zM796 603h2v2h-2zM803 646h3v2h-3zM801 609h3v1h-3zM793 613h4v1h-4zM793 639h4v1h-4zM793 596h4v1h-4zM798 656h3v2h-3zM796 643h5v1h-5zM790 660h4v1h-4zM799 616h3v2h-3zM792 616h3v2h-3zM791 618h4v1h-4zM800 644h2v2h-2zM804 638h3v1h-3zM797 575h4v1h-4zM792 658h2v1h-2zM799 602h5v1h-5zM796 581h3v1h-3zM805 620h2v1h-2zM798 621h2v1h-2zM797 598h2v1h-2zM791 648h2v1h-2zM797 614h4v1h-4zM798 563h5v2h-5zM803 613h4v1h-4zM806 589h2v1h-2zM796 629h2v2h-2zM803 586h5v2h-5zM804 626h5v2h-5zM793 636h5v2h-5zM796 619h3v1h-3zM792 628h3v1h-3zM796 618h2v1h-2zM797 600h5v1h-5zM797 658h2v2h-2zM802 637h5v1h-5zM789 629h2v2h-2zM794 588h2v2h-2zM787 659h3v1h-3zM801 589h4v1h-4zM804 570h2v2h-2zM796 645h3v2h-3zM799 638h2v1h-2zM804 619h3v1h-3zM800 610h2v2h-2zM798 643h5v1h-5zM795 660h3v2h-3zM799 592h4v1h-4zM791 654h5v2h-5zM796 628h5v1h-5zM796 579h4v2h-4zM797 649h5v1h-5zM796 643h3v1h-3zM803 627h3v1h-3zM804 643h4v1h-4zM804 612h3v1h-3zM795 603h5v1h-5zM796 600h5v1h-5zM787 653h3v1h-3zM788 648h4v1h-4zM789 661h4v1h-4zM800 587h2v2h-2zM794 654h2v2h-2zM806 622h2v2h-2zM796 620h4v1h-4zM797 642h3v2h-3zM797 621h4v2h-4zM801 640h4v1h-4zM805 583h3v2h-3zM803 614h2v2h-2zM786 649h3v2h-3zM805 588h4v1h-4zM795 601h3v1h-3zM802 561h5v2h-5zM789 649h2v2h-2zM805 576h3v1h-3zM805 586h5v1h-5zM805 589h4v1h-4zM794 609h4v2h-4zM799 641h2v1h-2zM802 636h3v2h-3zM800 613h2v1h-2zM797 578h5v2h-5zM799 599h4v1h-4zM806 616h5v1h-5zM801 651h4v1h-4zM804 581h5v1h-5zM792 637h5v2h-5zM788 645h5v1h-5zM794 594h4v1h-4zM793 622h2v1h-2zM798 639h4v2h-4zM803 571h5v1h-5zM789 654h3v2h-3zM792 602h2v1h-2zM793 592h4v1h-4zM793 652h2v1h-2zM792 625h3v1h-3zM802 650h4v1h-4zM798 648h5v1h-5zM803 601h4v1h-4zM788 654h5v1h-5zM805 570h2v1h-2zM797 650h3v1h-3zM795 647h4v1h-4zM801 591h5v2h-5zM792 641h2v1h-2zM802 573h2v1h-2zM804 622h2v2h-2zM803 571h5v1h-5zM802 560h4v2h-4zM789 640h3v1h-3zM689 760h2v2h-2zM664 731h2v3h-2zM678 753h3v2h-3zM676 747h2v2h-2zM687 763h1v2h-1zM661 736h2v1h-2zM667 740h2v1h-2zM709 786h1v1h-1zM707 789h1v2h-1zM680 751h1v1h-1zM677 746h1v3h-1zM658 720h1v1h-1zM700 783h2v1h-2zM703 787h2v2h-2zM703 773h3v3h-3zM707 781h2v1h-2zM713 790h3v2h-3zM663 730h2v1h-2zM689 761h2v1h-2zM703 775h3v2h-3zM716 794h1v3h-1zM699 766h2v1h-2zM674 744h1v2h-1zM658 720h1v2h-1zM659 720h3v1h-3zM681 756h1v1h-1zM676 744h2v3h-2zM699 773h1v1h-1zM673 749h1v1h-1zM667 740h2v1h-2zM715 794h3v1h-3zM670 741h1v1h-1zM681 755h2v1h-2zM681 751h1v2h-1zM658 719h1v2h-1zM683 761h2v3h-2zM713 790h3v1h-3zM661 729h1v2h-1zM709 785h1v1h-1zM690 763h2v1h-2zM677 752h3v2h-3zM701 766h1v3h-1zM667 740h1v2h-1zM661 729h2v2h-2zM674 745h1v1h-1zM670 742h1v1h-1zM663 731h2v2h-2zM715 792h1v2h-1zM700 773h1v2h-1zM702 779h3v2h-3zM677 754h1v2h-1zM704 786h3v3h-3zM672 745h1v3h-1zM694 766h3v2h-3zM658 726h2v3h-2zM684 762h2v1h-2zM699 782h2v3h-2zM670 743h2v1h-2zM692 765h2v3h-2zM679 757h2v1h-2zM700 767h2v2h-2zM670 741h2v1h-2zM701 766h1v1h-1zM705 785h2v2h-2zM660 723h2v3h-2zM699 777h2v2h-2zM711 787h1v1h-1zM669 741h3v1h-3zM667 736h2v2h-2zM683 754h1v1h-1zM710 789h2v1h-2zM660 731h3v2h-3zM678 754h1v1h-1zM683 755h1v2h-1zM705 783h3v2h-3z"/>
<path fill="#004466" d="M802 588h4v58h-4z"/>
</g>
<path d="M248 678Q256 690 252 700T236 724L226 730M313 662H350M540 718L572 699" fill="none" stroke="#000" stroke-width="1.2"/>
<path d="M299.5 59.2 L303.6 57.9 L307.0 55.2 L310.3 55.8 L314.4 57.9 L315.0 62.6 L317.0 66.0 L319.1 70.7 L323.2 71.4 L323.2 73.5 L319.1 74.1 L319.8 78.2 L317.1 80.9 L318.5 85.6 L323.2 90.4 L323.2 96.5 L321.2 93.8 L317.1 88.4 L314.4 82.9 L313.7 75.5 L310.3 68.7 L309.6 59.9 L307.0 58.6 L304.9 62.6 L300.8 61.9Z" fill="#2d4866"/>
<path d="M368.2 262.1 L371.2 259.5 L374.2 258.2 L378.1 259.9 L380.7 262.9 L383.3 264.7 L389.3 266.4 L391.0 268.1 L393.6 272.0 L396.6 276.3 L394.5 275.9 L391.0 273.3 L386.7 269.8 L381.6 268.5 L377.2 265.5 L375.1 262.5 L371.6 261.6 L369.0 262.9Z" fill="#2d4866"/>
<path d="M440.0 377.0 L443.0 370.0 L448.0 365.0 L451.0 363.0 L451.0 368.0 L446.0 373.0 L443.0 377.0Z" fill="#2d4866"/>
<path d="M424.0 414.0 L427.0 420.0 L429.0 426.0 L431.0 432.0 L429.0 434.0 L426.0 428.0 L424.0 420.0Z" fill="#2d4866"/>
<path d="M604.4 306.6 L606.8 313.5 L609.8 312.5 L616.7 310.5 L615.7 307.6 L620.6 303.2 L622.6 298.7 L626.0 294.8 L627.5 293.3 L624.6 292.3 L621.6 286.4 L620.6 286.4 L620.6 291.3 L623.6 294.3 L616.2 294.8 L616.2 292.3 L618.2 289.9 L617.2 287.4 L614.7 285.4 L612.7 288.4 L612.7 296.7 L615.7 300.7 L612.2 305.6 L609.8 304.6 L607.3 308.6Z" fill="#2d4866"/>
<path d="M526.0 503.0 L530.0 510.0 L528.0 520.0 L532.0 527.0 L536.0 533.0 L533.0 539.0 L528.0 532.0 L525.0 522.0 L524.0 510.0Z" fill="#2d4866"/>
<path d="M540.0 601.0 L545.0 606.0 L552.0 612.0 L558.0 606.0 L560.0 610.0 L555.0 619.0 L545.0 619.0 L541.0 612.0Z" fill="#2d4866"/>
<path d="M124.0 658.0 L128.0 653.0 L134.0 653.0 L137.0 658.0 L134.0 665.0 L127.0 667.0 L123.0 664.0Z" fill="#2d4866"/>
<path d="M42.0 681.0 L46.0 680.0 L50.0 684.0 L52.0 688.0 L47.0 689.0 L43.0 685.0Z" fill="#2d4866"/>
<path d="M57.0 685.0 L60.0 688.0 L62.0 695.0 L65.0 702.0 L72.0 705.0 L80.0 705.0 L84.0 708.0 L80.0 710.0 L70.0 708.0 L63.0 705.0 L59.0 697.0 L57.0 690.0Z" fill="#2d4866"/>
<path d="M141.0 707.0 L144.0 702.0 L148.0 697.0 L152.0 695.0 L155.0 700.0 L153.0 706.0 L148.0 710.0 L143.0 712.0Z" fill="#2d4866"/>
<path d="M784.8 654.0 L786.6 664.5 L784.8 674.8 L791.7 685.0 L795.0 704.0 L790.0 711.0 L788.3 719.7 L784.8 726.6 L786.6 733.4" fill="none" stroke="#000" stroke-width="3.2"/>
<path d="M784.8 654.0 L786.6 664.5 L784.8 674.8 L791.7 685.0 L795.0 704.0 L790.0 711.0 L788.3 719.7 L784.8 726.6 L786.6 733.4" fill="none" stroke="#004466" stroke-width="1.6"/>
<path d="M784.8 733.0 L790.0 740.0 L797.0 748.0 L795.0 754.0 L790.0 752.0 L786.0 744.0Z" fill="#2d4866"/>
<path d="M310 662.7L350.3 659.2L376.7 652.2L403 647.8L429.4 647.8L455.7 652.2L480 666.2" fill="none" stroke="#000" stroke-width="2"/>
<g fill="none" stroke="#8a7420" stroke-width="1" stroke-linejoin="round" shape-rendering="crispEdges">
<path d="M181.6 6.0 L196.0 25.0 L200.5 40.6 L200.5 81.0 L187.0 114.0 L176.0 149.0 L160.0 184.0 L147.0 203.0 L153.0 222.7 L167.0 237.0 L170.0 265.0 L172.8 307.6 L175.6 333.0 L181.0 358.6 L182.7 381.0 L170.0 420.0 L161.0 431.0 L155.8 471.0 L141.6 496.5 L130.0 539.0 L127.4 590.0 L126.7 633.8 L134.0 646.0 L135.3 665.8 L132.9 673.2"/>
<path d="M6.0 661.0 L14.8 658.4 L66.4 643.7 L98.4 641.2 L128.0 640.0 L152.6 641.2 L184.5 654.7 L214.0 648.6 L246.0 643.7 L281.0 640.0 L306.8 624.0 L351.5 631.6 L377.6 635.0 L411.6 618.0 L445.6 615.0 L479.6 615.0 L525.0 618.0 L560.0 629.6 L596.6 638.0 L626.5 643.0 L659.7 647.7 L693.0 654.4 L715.0 661.0 L755.0 658.8 L781.6 654.4 L786.0 653.8"/>
<path d="M88.6 653.5 L98.4 665.8 L115.6 672.0 L132.9 673.2 L152.6 680.6 L160.0 686.7 L172.2 680.6 L187.0 661.0 L196.9 641.2 L204.2 609.2 L214.0 574.8 L216.5 560.0"/>
<path d="M6.0 616.6 L12.3 633.8 L14.8 658.4"/>
<path d="M6.0 461.0 L56.6 468.0 L99.0 474.0 L130.0 474.0 L147.0 479.5 L198.0 476.6 L255.0 474.0 L270.0 471.0 L304.0 448.0 L322.0 425.0 L340.8 404.0 L355.0 398.0 L389.0 387.0 L406.0 375.6 L411.6 370.0 L451.0 364.0 L496.6 361.4 L540.0 353.0 L576.8 350.0 L584.0 352.0 L591.0 353.0 L625.0 361.5 L681.6 367.0 L749.6 372.8 L806.0 341.6"/>
<path d="M406.0 375.6 L423.0 358.6 L451.0 330.0 L474.0 307.6 L496.6 265.0 L505.0 242.5 L510.7 234.0"/>
<path d="M257.7 474.0 L238.0 519.0 L218.0 547.0 L214.0 574.8"/>
<path d="M472.5 6.0 L470.0 35.0 L456.0 54.0 L434.5 62.0 L423.7 87.0 L410.0 116.5 L404.7 133.0 L399.0 176.0 L396.6 220.0 L399.0 237.0 L394.6 256.6 L396.0 299.0 L400.0 341.6 L403.0 364.0 L408.8 378.0 L406.0 398.0 L411.6 421.0 L431.4 456.8 L440.0 472.0 L434.0 485.0 L423.0 508.0 L397.4 544.6 L377.6 564.4 L340.8 592.8 L312.5 604.0 L306.8 624.0"/>
<path d="M440.0 472.0 L468.0 471.0 L510.7 448.0 L530.5 420.0 L539.0 398.0 L560.0 384.0 L562.7 375.6 L579.7 358.6"/>
<path d="M591.0 336.0 L625.0 319.0 L662.0 296.0 L698.6 273.6 L732.6 256.6 L766.6 237.0 L806.0 222.7"/>
<path d="M579.7 336.0 L570.6 329.0 L556.0 310.0 L546.0 292.5 L538.0 260.0 L522.0 239.7 L534.0 211.0 L555.0 185.0 L578.8 162.5 L615.0 146.0"/>
<path d="M582.5 361.5 L596.6 375.6 L611.0 398.0 L627.8 420.0 L636.0 431.0 L630.7 448.0 L630.7 505.0 L636.0 525.0 L647.6 544.6 L653.0 578.6 L659.0 604.0 L673.0 624.0 L677.5 630.0 L690.8 641.0 L701.8 656.6 L713.0 672.0 L721.8 694.0 L737.3 723.0 L746.0 747.5 L752.8 774.0 L755.0 789.6 L756.0 806.0"/>
<path d="M6.0 256.6 L37.0 255.0 L68.0 251.0 L113.0 234.0 L155.8 224.0 L164.0 225.5 L175.6 222.7 L204.0 207.0 L230.0 187.0 L271.0 168.0 L300.0 162.6 L334.0 160.0 L375.0 146.0 L404.7 133.0 L437.0 133.0 L483.0 138.0 L516.0 138.0 L540.0 154.0 L578.0 160.0 L613.0 152.0 L640.0 150.0 L659.0 143.5 L670.0 154.0 L681.0 168.0 L686.0 184.0 L702.5 189.5 L756.6 179.0 L806.0 173.0"/>
<path d="M659.0 143.5 L675.0 133.0 L708.0 114.0 L740.0 95.0 L770.0 81.0 L806.0 72.0"/>
<path d="M241.0 6.0 L260.0 35.0 L265.6 54.0 L284.5 59.6 L300.0 54.0"/>
<path d="M280.0 60.0 L307.0 54.0 L334.0 70.5 L361.0 89.5 L383.0 108.0 L402.0 119.0 L404.7 133.0 L432.0 162.6 L448.0 190.0 L475.0 220.0 L482.0 222.7 L510.7 237.0 L522.0 237.0"/>
<path d="M241.0 6.0 L227.6 21.7 L227.6 54.0 L216.8 65.0 L200.5 70.5"/>
<path d="M589.0 6.0 L589.0 24.0 L602.0 43.0 L605.0 49.0 L599.6 81.0 L605.0 95.0 L591.0 108.0 L597.0 122.0 L613.0 146.0 L640.0 150.0"/>
<path d="M716.0 189.5 L729.5 211.0 L740.0 220.0 L761.0 239.7 L772.0 279.0"/>
<path d="M738.0 254.0 L766.6 279.0 L806.0 307.6"/>
<path d="M636.0 431.0 L647.6 442.7 L676.0 456.8 L738.0 471.0 L795.0 488.0 L806.0 493.6"/>
<path d="M803.4 540.0 L801.7 557.0 L786.0 591.7 L785.0 609.0 L788.0 636.6 L784.5 653.8 L786.0 660.7 L793.0 669.3 L796.6 680.0 L800.0 700.0"/>
<circle cx="402" cy="133" r="35"/>
<circle cx="584" cy="347" r="10"/>
<circle cx="786" cy="656" r="8"/>
<circle cx="164" cy="225" r="5"/>
</g>
<g fill="none" stroke="#000" stroke-width="1" stroke-linejoin="round" shape-rendering="crispEdges">
<path d="M6.0 105.0 L154.5 105.0 L161.0 116.5 L152.0 130.0 L138.0 149.0 L187.0 149.0"/>
<path d="M202.2 6.6 L201.9 7.3 L201.6 8.0 L201.3 8.6 L201.2 9.1 L201.2 9.5 L201.3 9.9 L201.6 10.2 L202.0 10.6 L202.6 10.9 L203.2 11.2 L203.9 11.6 L204.6 12.1 L205.2 12.6 L205.8 13.2 L206.3 13.8 L206.7 14.5 L206.9 15.3 L206.9 16.1 L206.8 16.9 L206.6 17.7 L206.4 18.5 L206.0 19.3 L205.7 20.0 L205.4 20.6 L205.2 21.1 L205.0 21.6 L205.1 22.0 L205.3 22.4 L205.6 22.7 L206.1 23.1 L206.7 23.4 L207.4 23.7 L208.1 24.1 L208.8 24.6 L209.5 25.1 L210.0 25.7 L210.5 27.3 L210.5 28.1 L210.2 28.9 L209.8 29.6 L209.3 30.3 L208.7 30.9 L208.0 31.4 L207.4 31.9 L206.7 32.3 L206.2 32.7 L205.8 33.0 L205.5 33.4 L205.4 33.8 L206.1 34.5 L206.2 35.0 L206.3 35.6 L206.5 36.2 L206.7 36.8 L206.9 37.5 L207.1 38.2 L207.2 38.9 L207.2 39.6 L207.2 40.3 L207.0 40.1 L207.3 40.8 L207.5 41.4 L207.6 42.1 L207.7 42.8 L207.7 43.5 L207.8 44.2 L207.8 44.8 L207.9 45.4 L208.0 46.0 L208.2 46.4 L208.4 46.9 L208.8 47.3 L209.2 47.6 L209.7 48.0 L210.3 48.3 L210.9 48.6 L211.5 49.0 L212.0 49.4 L212.6 49.8 L213.1 50.3 L213.5 50.9 L214.1 51.4 L214.3 52.1 L214.5 52.9 L214.6 53.6 L214.7 54.0 L215.0 54.7 L215.4 55.3 L215.7 55.8 L216.0 56.3 L216.3 56.7 L216.7 56.9 L217.1 57.1 L217.6 57.2 L218.1 57.1 L218.7 57.0 L219.4 56.9 L220.1 56.8 L220.9 56.8 L221.7 56.8 L222.4 56.8 L223.2 57.0 L223.9 57.3 L224.5 57.7 L225.1 58.2 L225.6 58.8 L226.0 59.4 L226.4 60.1 L226.8 60.7 L227.1 61.3 L227.4 61.8 L227.7 62.3 L228.0 62.6 L228.4 62.8 L228.9 62.9 L228.9 61.8 L228.7 62.1 L229.2 62.6 L229.8 63.2 L230.4 63.8 L231.0 64.6 L231.5 65.3 L231.8 66.1 L232.0 67.0 L231.9 67.8 L231.7 68.6 L231.3 69.4 L230.8 70.1 L230.2 70.8 L229.5 71.4 L228.8 71.9 L228.2 72.4 L227.7 72.8 L227.3 73.2 L227.2 73.6 L227.1 73.9 L227.3 74.3 L227.7 74.7 L228.2 75.2 L228.7 75.8 L229.4 76.4 L229.7 76.9 L230.0 77.6 L230.2 78.4 L230.3 79.3 L230.4 80.2 L230.3 81.1 L229.5 82.4 L228.8 82.9 L228.1 83.4 L227.4 83.8 L226.8 84.0 L226.2 84.3 L225.6 84.5 L225.2 84.6 L224.9 84.8 L224.6 85.0 L224.5 85.3 L224.4 85.7 L224.4 86.1 L224.5 86.7 L224.5 87.3 L224.5 88.0 L224.4 88.8 L224.2 89.6 L224.0 90.4 L223.6 91.2 L223.1 92.0 L222.6 92.7 L222.0 93.3 L221.4 94.2 L220.6 94.6 L219.8 94.9 L219.0 95.1 L218.4 95.2 L217.9 94.3 L217.5 94.2 L217.2 94.1 L217.0 94.1 L216.8 94.4 L216.6 94.7 L216.5 95.2 L216.3 95.8 L216.0 96.5 L215.7 97.2 L215.3 97.8 L214.8 98.6 L214.2 99.3 L213.5 100.0 L212.8 100.6 L211.9 101.0 L211.0 101.3 L210.1 101.4 L209.2 101.5 L208.3 101.4 L207.6 101.3 L206.9 101.1 L206.4 101.0 L206.0 100.9 L205.7 101.0 L205.9 101.6 L206.8 102.2 L206.4 102.2 L205.9 102.3 L205.4 102.3 L204.7 102.4 L203.9 102.3 L203.1 102.3 L202.3 102.1 L201.5 101.8 L200.7 101.5 L199.9 101.0 L201.6 100.9 L201.3 101.8 L201.1 102.6 L200.7 103.3 L200.4 103.9 L200.0 104.4 L199.7 104.8 L199.5 105.2 L199.3 105.6 L199.3 105.9 L199.3 106.2 L199.5 106.5 L199.7 106.9 L200.3 107.2 L200.4 107.8 L200.5 108.4 L200.6 109.2 L200.6 110.0 L200.7 111.0 L200.6 111.9 L200.3 112.7 L199.9 113.5 L199.4 114.2 L198.8 114.8 L198.2 115.4 L197.6 115.8 L196.9 116.2 L196.4 116.6 L195.9 116.8 L195.5 117.1 L195.2 117.4 L195.1 117.7 L195.0 118.0 L195.1 118.4 L195.2 118.9 L195.4 119.5 L195.8 119.8 L196.0 120.6 L196.1 121.4 L196.3 122.3 L196.3 123.2 L196.2 124.2 L196.0 125.1 L195.6 126.0 L195.1 126.8 L194.5 127.5 L193.9 128.1 L193.3 128.6 L192.6 129.0 L192.1 129.4 L191.6 129.6 L191.3 129.8 L191.1 130.0 L191.0 130.2 L191.1 130.5 L191.3 130.9 L191.6 131.3 L192.0 131.9 L192.3 132.6 L192.6 133.4 L192.9 134.2 L193.0 135.1 L193.0 136.1 L192.9 137.1 L192.6 138.0 L192.2 138.8 L191.9 139.7 L191.2 140.4 L190.4 140.9 L189.7 141.4 L189.0 141.7 L188.3 141.8 L187.8 142.0 L187.5 142.1 L187.3 142.3 L187.3 142.5 L187.4 142.9 L187.7 143.3 L188.0 143.9 L188.4 144.5 L188.7 145.3 L189.0 146.2 L189.2 147.1 L189.3 148.1 L189.1 149.0 L189.0 148.5 L189.3 149.4 L189.4 150.4 L189.3 151.4 L189.1 152.3 L188.8 153.1 L188.4 153.9 L188.0 154.5 L187.7 155.1 L187.5 155.5 L187.4 155.8 L187.4 156.0 L187.6 156.2 L188.0 156.3 L189.4 155.7 L189.5 156.5 L189.5 157.3 L189.5 158.2 L189.5 159.1 L189.3 160.0 L189.0 160.8 L188.6 161.5 L188.1 162.0 L187.4 162.5 L186.6 162.8 L185.7 163.0 L184.8 163.1 L183.9 163.1 L183.1 163.0 L182.3 163.0 L181.7 163.0 L181.1 163.0 L180.7 163.2 L180.4 163.5 L180.3 163.9 L180.2 164.5 L180.3 165.2 L180.3 165.9 L180.3 166.8 L180.8 167.3 L180.7 167.7 L180.7 168.7 L180.6 169.7 L180.3 170.6 L179.8 171.5 L179.1 172.3 L178.4 172.9 L177.5 173.4 L176.6 173.8 L175.7 174.0 L174.9 174.2 L174.2 174.3 L173.7 174.4 L173.3 174.5 L173.1 174.6 L173.1 174.8 L173.2 175.2 L173.5 175.6 L173.7 177.2 L173.8 177.9 L173.9 178.6 L174.0 179.3 L174.0 180.1 L174.0 180.8 L173.8 181.5 L173.5 182.2 L173.1 182.8 L172.7 183.3 L172.1 183.8 L171.5 184.2 L170.8 184.6 L170.1 184.9 L169.5 185.2 L169.0 185.5 L168.5 185.8 L168.1 186.1 L167.8 186.5 L167.7 187.0 L167.6 187.5 L167.6 188.1 L167.6 188.8 L167.6 189.5 L167.7 190.2 L167.7 191.0 L167.6 191.7 L167.4 192.4 L167.2 193.1 L166.8 193.7 L166.4 194.2 L165.8 194.7 L165.2 195.2 L164.6 195.5 L163.7 196.2 L162.9 196.3 L162.2 196.5 L161.6 196.7 L161.2 196.9 L160.8 197.3 L160.6 197.7 L160.6 198.1 L160.7 198.6 L160.9 199.2 L161.2 199.9 L161.4 200.7 L161.7 201.5 L161.8 202.4 L161.8 203.3 L161.7 204.1 L161.4 204.9 L161.0 205.6 L160.5 206.2 L159.8 206.7 L159.0 207.1 L158.3 207.5 L157.5 207.8 L156.8 208.1 L156.2 208.4 L155.7 208.6 L155.4 208.8 L155.1 209.1 L155.0 209.5 L155.0 209.9 L154.9 211.1 L155.4 211.5 L156.0 211.9 L156.6 212.4 L157.1 212.9 L157.7 213.6 L158.2 214.3 L158.5 215.0 L158.8 215.8 L158.9 216.7 L158.8 217.5 L158.7 218.4 L158.4 219.1 L158.1 219.9 L157.8 220.6 L157.5 221.2 L157.0 221.8 L156.8 222.3 L156.7 222.6 L156.7 223.0 L157.6 221.2 L157.4 221.6 L157.2 222.1 L157.0 222.8 L156.8 223.5 L156.5 224.3 L156.1 225.1 L155.6 225.8 L155.0 226.4 L154.3 227.0 L153.5 227.4 L152.7 227.6 L151.8 227.7 L150.9 227.7 L150.1 227.6 L149.2 227.4 L148.8 227.9 L148.1 228.1 L147.6 228.2 L147.1 228.4 L146.8 228.6 L146.7 228.9 L146.6 229.3 L146.7 229.8 L146.9 230.4 L147.0 231.0 L147.2 231.8 L147.3 232.7 L147.4 233.5 L147.7 234.5 L147.5 235.5 L149.7 237.7 L149.0 238.8 L147.9 239.5 L146.5 240.0 L146.8 238.8 L145.6 239.9 L144.2 240.8 L142.8 241.5 L141.5 242.0 L140.5 242.3 L139.9 242.4 L139.6 242.4 L139.8 242.3 L140.4 242.1 L141.4 242.0 L142.7 242.0 L144.2 242.2 L145.8 242.5 L147.4 243.0 L148.8 243.7 L150.0 244.7 L150.8 245.8 L151.2 247.0 L144.8 253.0 L143.6 252.4 L142.5 251.3 L141.6 250.0 L140.8 248.5 L140.2 247.0 L139.9 245.5 L139.7 244.3 L139.2 244.1 L139.5 243.6 L139.8 243.5 L140.1 243.8 L140.3 244.4 L140.3 245.3 L140.1 246.5 L139.7 247.8 L139.0 249.1 L138.1 250.3 L136.9 251.3 L135.5 252.0 L134.1 252.4 L137.1 249.9 L136.3 251.2 L135.2 252.3 L133.8 253.1 L132.4 253.6 L130.9 253.9 L129.6 253.9 L128.0 253.3 L126.9 253.0 L126.2 252.6 L125.8 252.3 L125.9 252.1 L126.5 252.1 L127.3 252.3 L128.4 252.8 L129.7 253.5 L131.2 254.7 L132.3 256.0 L133.1 257.5 L133.6 259.0 L133.7 260.5 L133.4 261.9 L132.7 263.2 L131.6 264.2 L130.2 264.9 L128.6 265.3 L126.9 265.5 L125.3 265.4 L123.7 265.1 L122.4 264.7 L121.5 264.2 L120.9 263.8 L120.7 263.5 L121.0 263.4 L121.6 263.6 L122.6 264.0 L123.7 264.7 L124.0 265.7 L125.5 266.4 L126.9 267.4 L127.6 269.1 L128.4 270.2 L128.8 271.4 L128.8 272.6 L128.5 273.8 L127.8 274.8 L126.8 275.8 L125.6 276.6 L124.2 277.2 L122.8 277.6 L121.5 277.9 L120.4 278.0 L119.6 278.1 L119.1 278.1 L119.0 278.1 L119.3 278.2 L119.9 278.3 L120.9 278.6 L122.0 279.0 L123.3 279.6 L124.5 280.4 L125.6 280.7 L126.4 281.9 L127.0 283.2 L127.2 284.6 L125.9 288.1 L124.7 289.0 L123.4 289.5 L122.0 289.8 L120.6 289.9 L119.2 289.6 L117.9 289.2 L116.9 288.8 L116.2 288.2 L115.7 287.8 L115.6 287.4 L115.7 287.3 L116.1 287.4 L116.7 287.8 L117.3 288.5 L118.0 289.5 L118.6 290.6 L119.1 292.0 L118.0 295.7 L118.0 297.0 L117.7 298.0 L117.3 298.7 L116.5 299.1 L115.6 299.1 L114.5 298.7 L113.2 298.1 L111.9 297.3 L110.6 296.4 L109.4 295.6 L108.3 294.8 L107.3 294.2 L106.6 293.9 L106.1 293.9 L105.9 294.3 L105.9 295.0 L105.2 296.6 L105.8 297.8 L106.6 299.1 L107.3 300.5 L108.0 301.9 L108.5 303.2 L108.7 304.4 L108.7 305.4 L108.3 306.1 L107.6 306.6 L106.6 306.7 L105.4 306.7 L104.0 306.4 L102.4 306.0 L100.9 305.5 L99.5 305.1 L98.3 304.7 L97.4 304.5 L96.8 304.6 L95.8 306.2 L95.9 306.7 L96.4 307.3 L97.2 308.1 L98.2 309.0 L99.3 310.0 L100.4 311.1 L101.3 312.3 L102.1 313.3 L102.6 314.4 L102.7 315.3 L102.4 316.0 L101.8 316.7 L100.8 317.1 L99.5 317.4 L98.1 317.6 L96.5 317.6 L95.0 317.7 L93.6 317.7 L92.5 317.7 L92.1 316.8 L91.5 316.9 L91.3 317.2 L92.6 318.5 L92.8 319.2 L93.2 320.0 L93.6 320.9 L94.1 321.9 L94.5 323.0 L94.7 324.1 L94.8 325.2 L94.7 326.1 L94.4 326.9 L93.8 327.6 L93.1 328.1 L92.1 328.4 L91.0 328.5 L89.9 328.5 L88.7 328.4 L87.6 328.3 L86.7 328.2 L85.9 328.1 L85.3 328.2 L84.8 328.8 L84.7 329.2 L84.9 329.7 L85.3 330.3 L85.8 331.1 L86.4 332.0 L87.0 333.0 L87.5 334.0 L87.9 335.1 L88.1 336.1 L88.1 337.0 L87.1 337.5 L86.3 338.7 L85.4 339.7 L84.4 340.6 L83.3 341.2 L82.3 341.5 L81.4 341.7 L80.6 341.6 L80.0 341.5 L79.6 341.2 L79.5 340.9 L79.4 341.0 L79.7 340.8 L80.0 340.9 L80.5 341.1 L81.1 341.5 L81.6 342.2 L82.1 343.1 L82.4 344.2 L82.6 345.5 L82.5 346.8 L82.2 348.2 L81.7 349.5 L81.0 350.8 L80.2 351.8 L79.3 352.7 L78.3 353.3 L77.3 353.7 L76.7 351.7 L75.3 351.7 L74.2 351.8 L73.4 352.0 L72.9 352.3 L72.8 352.7 L73.0 353.2 L73.6 353.9 L74.1 355.9 L75.4 356.3 L76.8 356.7 L78.2 357.1 L79.5 357.7 L80.5 358.3 L81.3 358.9 L81.7 359.7 L81.7 360.4 L81.3 361.3 L80.6 362.1 L79.6 362.9 L78.4 363.8 L77.1 364.5 L75.9 365.2 L74.6 367.7 L73.5 367.8 L72.8 367.8 L72.5 367.6 L72.7 367.3 L73.3 367.1 L74.3 366.9 L75.6 366.9 L77.1 367.1 L78.8 367.5 L80.4 368.1 L81.8 369.0 L83.0 370.1 L83.8 371.4 L84.1 372.8 L84.0 374.2 L83.5 375.6 L82.6 377.0 L81.9 377.6 L80.7 378.8 L79.4 379.9 L78.1 380.7 L77.0 381.2 L76.0 381.5 L75.4 381.5 L75.3 381.3 L77.3 380.3 L77.6 379.9 L78.3 379.6 L79.2 379.5 L80.2 379.6 L81.4 379.9 L82.6 380.5 L83.7 381.3 L84.7 382.4 L85.5 383.7 L86.0 385.2 L86.2 386.7 L86.2 388.1 L85.9 389.5 L85.4 390.8 L84.7 391.8 L83.9 392.5 L83.2 393.0 L82.8 392.4 L82.5 392.6 L82.3 392.7 L82.3 392.7 L83.3 390.8 L83.7 391.1 L84.1 391.5 L84.5 392.2 L84.9 393.0 L85.2 394.0 L85.4 395.1 L85.4 396.3 L85.2 397.4 L84.8 398.6 L84.2 399.6 L83.4 400.5 L82.5 401.3 L81.5 401.8 L80.5 402.2 L79.5 402.4 L78.7 402.5 L77.2 401.6 L76.3 401.4 L75.8 401.3 L75.5 401.4 L75.6 401.5 L75.3 403.9 L76.1 404.1 L77.2 404.4 L78.4 404.7 L79.7 405.2 L81.0 405.8 L82.1 406.6 L83.0 407.5 L83.6 408.4 L83.8 409.5 L83.7 410.5 L83.3 411.6 L82.5 412.6 L81.5 413.5 L80.4 414.4 L78.9 414.1 L77.6 414.8 L76.5 415.4 L75.6 416.0 L75.2 416.5 L75.1 416.9 L75.5 417.3 L76.2 417.7 L77.3 418.0 L78.7 418.4 L80.2 418.8 L81.7 419.2 L83.2 419.7 L84.4 420.3 L85.3 421.0 L85.8 421.7 L86.0 422.4 L85.7 423.2 L85.0 424.1 L84.0 424.9 L82.7 425.7 L81.4 426.5 L80.0 427.3 L78.9 430.0 L77.8 430.2 L77.0 430.1 L76.6 429.9 L76.6 429.6 L77.0 429.3 L77.8 429.1 L79.0 429.0 L80.4 429.1 L81.3 429.5 L82.9 429.7 L84.5 430.1 L86.0 430.9 L87.2 431.9 L88.0 433.2 L88.5 434.6 L88.5 436.1 L88.1 437.7 L87.4 439.2 L86.4 440.5 L85.2 441.6 L84.0 442.5 L82.9 443.1 L81.9 443.5 L82.1 442.7 L81.9 442.9 L82.1 443.0 L82.6 442.9 L83.3 442.8 L84.4 442.8 L85.6 442.8 L86.9 442.9 L88.2 443.2 L89.5 443.7 L90.5 444.3 L91.3 445.1 L91.9 446.1 L92.1 447.2 L92.0 448.4 L91.6 449.6 L91.0 450.7 L90.2 451.8 L89.3 452.8 L88.4 453.6 L87.6 454.2 L87.0 454.7 L86.7 454.9 L86.7 455.0 L87.0 455.1 L87.6 455.1 L88.4 455.0 L89.5 454.9 L90.6 454.6 L92.0 454.7 L93.3 455.1 L94.6 455.6 L95.7 456.4 L96.5 457.3 L96.9 458.4 L97.1 459.6 L97.0 460.9 L96.5 462.2 L95.8 463.4 L95.0 464.5 L94.1 465.4 L93.2 466.2 L92.5 466.7 L91.9 467.0 L91.6 467.1 L91.6 467.1 L92.0 467.0 L92.7 466.8 L93.6 466.7 L94.8 466.6 L96.1 466.6 L97.5 466.8 L98.8 467.2 L100.0 467.8 L101.0 468.6 L101.7 469.6 L102.0 471.0 L102.2 472.5 L102.0 474.0 L101.6 475.4 L98.1 477.1 L96.8 477.1 L95.6 476.9 L94.7 476.5 L94.0 476.1 L93.6 475.7 L93.6 475.3 L93.9 475.2 L94.4 475.2 L95.0 475.5 L95.8 476.1 L96.6 477.0 L97.3 478.1 L97.9 479.4 L98.2 480.8 L98.2 482.3 L97.9 483.7 L97.3 485.1 L96.4 486.2 L95.3 487.2 L94.0 487.9 L92.6 487.7 L91.4 487.9 L90.3 487.9 L89.4 487.8 L88.7 487.6 L88.1 487.3 L87.9 487.1 L87.9 487.0 L88.1 487.0 L88.5 487.2 L89.0 487.6 L89.6 488.3 L90.2 489.1 L90.6 490.2 L91.0 491.4 L91.1 492.6 L90.9 493.9 L90.5 495.3 L89.8 496.4 L88.9 497.4 L87.9 498.1 L86.7 498.6 L85.5 498.9 L84.0 499.6 L82.7 499.4 L81.7 499.0 L81.0 498.5 L80.6 498.1 L80.4 497.7 L80.6 497.4 L81.1 497.4 L81.7 497.6 L82.5 498.1 L83.3 498.9 L84.0 500.0 L84.5 501.3 L84.9 502.7 L84.9 504.2 L84.6 505.7 L84.1 507.1 L83.2 508.3 L82.1 509.3 L80.7 510.0 L79.3 510.5 L77.9 510.6 L76.6 510.6 L75.4 510.3 L74.5 509.8 L73.8 509.4 L73.5 508.9 L73.8 508.7 L73.7 509.1 L73.8 509.7 L74.1 510.5 L74.6 511.4 L75.2 512.5 L75.8 513.5 L76.3 514.6 L76.7 515.7 L76.9 516.7 L76.9 517.5 L76.5 518.4 L76.0 518.9 L75.1 519.2 L74.1 519.4 L73.0 519.4 L71.8 519.3 L70.5 519.2 L69.4 519.1 L68.4 519.0 L67.6 519.1 L67.0 519.2 L66.7 519.5 L66.6 520.0 L66.8 520.7 L67.1 521.6 L67.6 522.5 L68.2 523.6 L68.9 524.8 L69.4 526.0 L69.9 527.1 L70.0 528.1 L69.9 529.0 L69.5 529.6 L68.8 530.1 L67.9 530.3 L66.7 530.3 L65.4 530.3 L64.0 530.1 L62.6 529.8 L61.4 529.6 L60.4 529.5 L59.5 529.5 L59.0 529.7 L58.8 530.1 L58.5 531.2 L59.0 531.9 L59.7 532.8 L60.5 533.8 L61.4 534.8 L62.2 535.9 L62.9 537.0 L63.4 538.1 L63.6 539.0 L63.6 539.8 L63.2 540.5 L62.4 541.0 L61.4 541.3 L60.2 541.5 L58.8 541.6 L57.4 541.6 L56.1 541.6 L54.9 541.6 L53.9 541.6 L53.2 541.8 L52.8 542.0 L52.8 542.5 L53.1 543.1 L53.6 543.8 L54.3 544.7 L55.2 545.8 L56.1 546.8 L56.9 548.0 L57.5 549.1 L58.0 550.1 L58.1 551.0 L57.9 551.8 L57.3 552.4 L56.5 552.8 L55.4 553.1 L54.1 553.3 L51.9 554.8 L50.8 554.9 L49.7 554.8 L48.9 554.6 L48.3 554.4 L48.0 554.2 L48.0 554.1 L47.9 554.7 L48.4 554.9 L49.1 555.2 L49.9 555.7 L50.7 556.4 L51.5 557.3 L52.2 558.4 L52.7 559.6 L53.0 560.8 L53.0 562.1 L52.7 563.4 L52.1 564.5 L51.3 565.5 L50.3 566.3 L49.2 566.9 L48.0 567.3 L46.9 567.6 L45.9 567.6 L45.1 567.6 L44.6 567.5 L44.3 567.4 L44.4 567.3 L45.6 567.5 L46.0 567.6 L46.5 567.9 L47.1 568.4 L47.7 569.1 L48.2 570.0 L48.6 571.1 L48.8 572.3 L48.8 573.5 L48.6 574.8 L48.3 576.1 L47.7 577.3 L46.9 578.3 L46.1 579.1 L45.2 579.8 L44.3 580.2 L43.5 580.4 L43.9 581.2 L43.4 581.4 L40.4 581.9 L40.1 581.9 L40.3 581.8 L40.9 581.6 L41.9 581.5 L43.3 581.5 L44.8 581.6 L46.4 581.9 L48.1 582.4 L49.5 583.1 L50.7 584.0 L51.6 585.1 L52.0 586.3 L52.0 587.6 L51.5 588.9 L50.7 590.2 L49.6 591.3 L48.2 592.4 L46.8 593.2 L45.4 593.9 L44.2 594.3 L44.2 594.1 L43.8 594.3 L43.7 594.4 L48.0 594.0"/>
<path d="M6.0 415.0 L80.0 415.0"/>
<path d="M185.6 593.5 L184.8 594.8 L184.9 596.4 L185.4 598.2 L185.6 599.9 L185.2 601.4 L184.4 602.7 L183.6 604.0 L183.2 605.5 L183.2 607.1 L182.8 608.5 L181.8 609.8 L180.2 610.8 L178.8 611.9 L178.1 613.2 L178.1 614.8 L178.3 616.5 L178.1 618.0 L178.4 619.6 L178.6 621.2 L179.4 622.6 L180.8 623.9 L181.9 625.2 L182.2 626.8 L181.8 628.6 L181.2 630.5 L181.2 632.1 L181.9 633.6 L182.8 635.0 L183.1 636.6 L183.5 638.8 L184.9 640.0 L187.0 640.2 L189.8 640.6 L190.8 641.9 L190.9 643.5 L190.7 645.3 L190.6 646.9 L191.1 648.4 L191.9 649.8 L192.3 651.3 L192.1 653.0 L191.7 654.7 L191.9 656.3 L193.0 657.5 L194.6 658.7 L195.9 659.9 L196.5 661.3 L196.6 662.9 L196.8 664.5 L197.5 665.9 L197.5 667.5"/>
<path d="M44.0 594.0 L187.0 594.0"/>
<path d="M206.0 105.0 L311.0 105.0 L310.0 89.5 L324.7 92.0 L421.0 91.0 L448.0 92.0 L560.0 95.0 L635.0 96.0 L784.0 95.0 L806.0 97.5"/>
<path d="M635.0 96.0 L654.0 88.0 L675.0 81.0 L681.0 73.0 L697.0 68.0 L697.0 58.0 L708.0 49.0 L729.5 38.0 L751.0 24.0 L762.0 12.0 L751.0 6.0"/>
<path d="M762.0 12.0 L765.0 21.7 L775.6 35.0 L786.0 42.0 L806.0 32.5"/>
<path d="M782.5 95.0 L782.7 96.5 L783.9 98.0 L785.0 99.5 L785.3 101.1 L784.9 102.6 L784.3 104.1 L784.3 105.7 L784.4 107.2 L784.0 108.7 L782.9 110.0 L781.4 111.3 L780.6 112.7 L780.8 114.3 L781.5 116.0 L781.8 117.6 L781.1 119.3 L779.4 119.5 L778.0 120.3 L776.6 121.5 L775.1 122.2 L773.3 121.8 L771.4 120.9 L769.0 121.0 L768.1 122.4 L767.5 124.0 L766.4 125.2 L764.9 126.1 L763.8 127.3 L763.3 129.1 L763.0 131.0 L762.1 132.4 L760.4 132.9 L758.4 133.3 L757.1 134.2 L756.1 135.6 L755.0 136.8 L754.0 137.2 L752.5 136.5 L750.9 136.5 L749.3 137.6 L747.6 138.7 L746.0 139.0 L744.5 138.3 L742.9 137.7 L741.3 137.7 L739.7 138.0 L738.1 137.7 L736.6 136.6 L733.9 135.8 L732.7 136.8 L732.2 138.6 L731.7 140.4 L730.8 141.7 L729.5 142.5 L728.2 143.5 L727.5 145.0 L726.8 146.6 L725.6 147.6 L723.8 147.9 L721.8 148.1 L720.3 148.8 L719.5 150.2 L719.2 151.8 L718.2 150.4 L717.6 148.8 L716.3 147.5 L714.3 146.8 L712.6 145.9 L713.8 144.7 L711.9 144.6 L710.1 144.8 L708.8 145.6 L707.7 146.8 L706.3 147.5 L704.7 147.8 L703.1 148.2 L702.0 149.4 L701.4 151.3 L700.8 153.0 L699.7 154.0 L698.0 154.5 L696.5 155.2 L695.4 156.3 L694.5 157.4 L693.4 158.4 L691.7 159.1 L690.0 159.7 L689.1 160.9 L688.9 162.6 L688.9 164.5 L688.3 165.9 L687.2 167.0 L686.1 168.1 L684.8 169.3 L683.7 170.6 L682.2 171.4 L680.3 171.2 L678.3 170.7 L676.6 171.1 L675.4 172.3 L674.3 173.6 L672.8 174.3 L671.2 174.7 L669.8 175.7 L668.9 177.3 L668.1 179.0 L666.8 179.8 L664.9 179.8 L663.0 179.6 L661.5 180.1 L660.3 181.2 L659.0 182.1 L657.4 182.5 L655.7 182.7 L654.4 183.5 L653.6 185.3 L652.9 187.1 L651.2 188.5 L649.5 188.1 L647.9 187.6 L646.3 187.7 L644.8 188.3 L643.2 188.3 L641.5 187.6 L639.8 186.7 L638.2 186.7 L636.8 187.8 L635.3 189.1 L633.8 189.7 L632.2 189.5 L630.6 189.5 L629.3 190.1 L628.1 191.3 L626.6 191.9 L624.8 191.6 L622.8 191.0 L621.2 191.2 L619.9 192.2 L618.8 193.5 L617.4 194.2 L615.5 194.8 L614.9 196.3 L615.1 198.2 L615.4 200.1 L614.9 201.7 L613.3 202.8 L611.6 203.8 L610.7 205.2 L610.3 206.9 L609.8 208.3 L608.3 209.2 L607.6 209.7 L606.2 210.4 L605.0 212.0 L603.7 213.5 L602.2 214.1 L600.5 213.8 L598.8 213.6 L597.2 214.2 L595.8 214.9 L594.1 214.9 L592.3 214.3 L589.3 215.4 L589.3 217.0 L590.2 218.7 L591.0 220.4 L590.9 221.9 L590.3 223.4 L590.1 225.0 L590.5 226.6 L590.8 228.3 L590.2 229.8 L588.7 231.2 L587.4 232.6 L587.2 234.1 L587.7 235.8 L588.1 237.4 L588.0 239.0"/>
<path d="M147.0 238.0 L300.0 237.4 L440.0 238.0 L493.7 239.0 L560.0 239.6 L588.0 239.0 L679.0 237.4"/>
<path d="M679.0 237.4 L710.0 228.0 L732.6 221.0 L806.0 222.7"/>
<path d="M678.3 236.9 L676.8 237.8 L676.0 239.1 L675.9 241.0 L675.9 242.9 L675.6 244.6 L674.5 245.8 L673.2 246.7 L672.1 247.9 L671.4 249.4 L670.8 250.9 L669.7 252.0 L668.0 252.7 L666.2 253.4 L665.0 254.5 L664.6 256.1 L664.5 258.0 L664.1 259.6 L663.1 260.9 L662.0 262.0 L663.2 263.0 L664.7 263.6 L666.3 264.2 L667.4 265.3 L667.9 267.0 L668.1 268.9 L668.6 270.5 L669.7 271.6 L671.2 272.3 L672.5 273.1 L673.5 274.3 L674.3 275.7 L675.4 276.8 L676.9 277.4 L678.8 277.7 L680.4 278.3 L681.3 279.5 L681.8 281.2 L682.3 282.9 L683.1 284.2 L684.5 285.2 L686.1 285.0 L687.8 285.5 L689.4 286.2 L691.1 286.6 L692.7 286.0 L694.4 284.7 L697.1 284.5 L697.8 285.9 L698.0 287.5 L698.3 289.1 L699.1 290.5 L700.1 291.7 L700.8 293.1 L700.8 294.9 L700.5 296.8 L700.6 298.5 L701.6 299.8 L703.1 300.8 L704.5 301.8 L705.3 303.2 L705.8 304.7 L706.4 306.2 L707.5 307.3 L708.9 308.4 L709.8 309.7 L710.0 311.4 L709.6 313.3 L709.5 315.1 L710.2 316.6 L711.4 317.7 L712.5 318.9 L713.2 320.4 L713.5 321.9 L714.2 323.3 L715.6 324.4 L717.3 325.3 L718.6 326.4 L719.1 327.9 L718.9 329.6 L719.5 331.2 L720.5 332.4 L721.8 333.2 L723.0 334.1 L723.9 335.3 L724.6 336.9 L725.5 338.2 L726.9 338.9 L728.8 339.1 L730.6 339.3 L732.0 340.0 L732.9 341.2 L733.7 342.7 L734.7 343.8 L736.0 344.6 L737.4 345.4 L738.3 346.6 L738.9 348.3 L739.4 350.1 L740.3 351.3 L741.8 352.0 L743.6 352.2 L745.2 352.7 L746.4 353.6 L747.3 354.9 L748.4 355.9 L749.9 356.5 L751.5 357.0 L752.8 357.8 L753.5 359.3 L753.9 361.2 L754.5 362.9 L755.5 364.0 L757.0 364.7 L758.5 365.2 L759.7 366.2 L760.5 367.2 L760.9 368.7 L761.9 369.9 L763.3 370.9 L764.7 372.0 L765.4 373.4 L765.3 375.0 L765.0 376.8 L765.0 378.4 L765.6 379.8 L766.5 381.1 L767.3 382.4 L767.7 384.1 L768.0 385.7 L768.9 387.0 L770.6 387.8 L772.4 388.5 L773.9 389.4 L774.6 390.8 L775.0 392.4 L775.5 394.0 L776.6 395.2 L777.7 396.3 L778.4 397.6 L778.8 399.3 L779.2 401.1 L779.9 402.5 L781.3 403.2 L783.0 403.6 L784.6 404.1 L785.9 405.0 L786.7 406.3 L787.7 407.5 L788.9 408.3 L790.5 408.9 L791.8 409.7 L792.6 411.0 L792.9 412.8 L793.2 414.6 L793.6 415.5 L794.5 416.9 L795.7 418.1 L796.5 419.6 L796.8 421.2 L797.2 422.7 L798.1 424.1 L799.7 425.2 L801.0 426.4 L801.6 427.9 L801.1 429.4 L801.8 431.2 L802.9 432.5 L804.4 433.3 L806.0 434.0"/>
<path d="M300.0 237.4 L306.8 248.0 L301.0 313.0 L295.5 370.0 L288.4 430.0 L281.3 505.0 L282.7 590.0 L284.0 652.0"/>
<path d="M492.0 239.0 L496.6 262.0 L505.0 313.0 L513.6 364.0 L525.0 430.0 L536.0 459.6 L544.7 479.5 L533.4 502.0 L530.5 539.0 L530.5 578.6 L539.0 594.0 L545.0 610.0 L546.0 620.0"/>
<path d="M343.6 594.0 L539.0 594.0"/>
<path d="M343.6 594.0 L340.8 607.0 L355.0 621.0 L357.8 641.0 L358.0 652.0"/>
<path d="M546.0 620.0 L625.0 624.0 L700.0 629.7 L722.4 630.5 L744.0 632.2 L745.7 641.7 L747.4 648.6 L757.8 651.2 L760.3 636.6 L757.8 615.9 L760.3 612.4 L768.0 609.8 L774.0 612.4 L786.2 616.7"/>
</g>
<g fill="none" stroke="#d8d8d8" stroke-width="1" shape-rendering="crispEdges">
<path d="M417.00 248.71A159.5 158.6 0 1 1 397.00 248.71"/>
<path d="M417.00 128.38A279.5 278.8 0 1 1 397.00 128.38"/>
<path d="M417.00 8.52A399.5 398.6 0 1 1 397.00 8.52"/>
</g>
<ellipse cx="407" cy="407" rx="39.8" ry="39.5" fill="none" stroke="#ff1010" stroke-width="1.3"/>
<g font-family="Liberation Sans" font-size="10.5px" fill="#f0f0a0" text-anchor="middle" letter-spacing="0.4">
<text x="406.2" y="371.3">31</text>
<text x="406.2" y="252.2">125</text>
<text x="406.2" y="132.0">219</text>
<text x="406.2" y="12.2">313</text>
</g>
<g fill="none" stroke-width="1.1">
<circle cx="110.3" cy="30.4" r="4.2" stroke="#f0f000"/>
<path d="M107.7 30.4H112.9" stroke="#f0f000"/>
<circle cx="114.4" cy="78.6" r="4.2" stroke="#f0f000"/>
<path d="M111.8 78.6H117.0" stroke="#f0f000"/>
<circle cx="666" cy="574.4" r="4.2" stroke="#f0f000"/>
<path d="M663.4 574.4H668.6M666.0 571.8V577.0" stroke="#f0f000"/>
<circle cx="706.3" cy="574.4" r="4.2" stroke="#f0f000"/>
<path d="M703.7 574.4H708.9M706.3 571.8V577.0" stroke="#f0f000"/>
<circle cx="609.2" cy="677.2" r="4.2" stroke="#f0f000"/>
<path d="M606.6 677.2H611.8M609.2 674.6V679.8" stroke="#f0f000"/>
<circle cx="638.3" cy="695.4" r="4.2" stroke="#e8b800"/>
<path d="M635.7 695.4H640.9M638.3 692.8V698.0" stroke="#e8b800"/>
<circle cx="628.3" cy="708.3" r="4.2" stroke="#00e8f0"/>
<path d="M625.7 708.3H630.9" stroke="#00e8f0"/>
<circle cx="678" cy="709" r="4.2" stroke="#e8b800"/>
<path d="M675.4 709.0H680.6M678.0 706.4V711.6" stroke="#e8b800"/>
<circle cx="669" cy="718" r="4.2" stroke="#e8b800"/>
<path d="M666.4 718.0H671.6M669.0 715.4V720.6" stroke="#e8b800"/>
<circle cx="711.4" cy="715.3" r="4.2" stroke="#e8b800"/>
<path d="M708.8 715.3H714.0" stroke="#e8b800"/>
<circle cx="738" cy="706" r="4.2" stroke="#e8b800"/>
<path d="M735.4 706.0H740.6M738.0 703.4V708.6" stroke="#e8b800"/>
<circle cx="748.4" cy="710" r="4.2" stroke="#e8b800"/>
<path d="M745.8 710.0H751.0M748.4 707.4V712.6" stroke="#e8b800"/>
<circle cx="738.4" cy="662.4" r="4.2" stroke="#e08020"/>
<path d="M735.8 662.4H741.0M738.4 659.8V665.0" stroke="#e08020"/>
<circle cx="603.5" cy="734.4" r="4.2" stroke="#e8b800"/>
<path d="M600.9 734.4H606.1M603.5 731.8V737.0" stroke="#e8b800"/>
<circle cx="635.3" cy="735.4" r="4.2" stroke="#e8b800"/>
<path d="M632.7 735.4H637.9" stroke="#e8b800"/>
<circle cx="568.5" cy="745.3" r="4.2" stroke="#e06010"/>
<path d="M565.9 745.3H571.1M568.5 742.7V747.9" stroke="#e06010"/>
<circle cx="678" cy="742.4" r="4.2" stroke="#f0f000"/>
<path d="M675.4 742.4H680.6M678.0 739.8V745.0" stroke="#f0f000"/>
<circle cx="668" cy="749.2" r="4.2" stroke="#f0f000"/>
<path d="M665.4 749.2H670.6M668.0 746.6V751.8" stroke="#f0f000"/>
<circle cx="709" cy="738" r="4.2" stroke="#f0f000"/>
<path d="M706.4 738.0H711.6M709.0 735.4V740.6" stroke="#f0f000"/>
<circle cx="788.3" cy="740" r="4.2" stroke="#e06010"/>
<path d="M785.7 740.0H790.9M788.3 737.4V742.6" stroke="#e06010"/>
<circle cx="773.4" cy="755.2" r="4.2" stroke="#00e8f0"/>
<path d="M770.8 755.2H776.0" stroke="#00e8f0"/>
<circle cx="750" cy="765.2" r="4.2" stroke="#e06010"/>
<path d="M747.4 765.2H752.6" stroke="#e06010"/>
<circle cx="640.4" cy="762.5" r="4.2" stroke="#e8b800"/>
<path d="M637.8 762.5H643.0M640.4 759.9V765.1" stroke="#e8b800"/>
<circle cx="606.2" cy="768.3" r="4.2" stroke="#f0f000"/>
<path d="M603.6 768.3H608.8M606.2 765.7V770.9" stroke="#f0f000"/>
<circle cx="562.6" cy="781.5" r="4.2" stroke="#e06010"/>
<path d="M560.0 781.5H565.2M562.6 778.9V784.1" stroke="#e06010"/>
<circle cx="558.1" cy="780.5" r="4.2" stroke="#e06010"/>
<path d="M555.5 780.5H560.7M558.1 777.9V783.1" stroke="#e06010"/>
<circle cx="603.5" cy="786.2" r="4.2" stroke="#e06010"/>
<path d="M600.9 786.2H606.1M603.5 783.6V788.8" stroke="#e06010"/>
<circle cx="598.3" cy="789.6" r="4.2" stroke="#e8b800"/>
<path d="M595.7 789.6H600.9M598.3 787.0V792.2" stroke="#e8b800"/>
<circle cx="634.4" cy="783.5" r="4.2" stroke="#e8b800"/>
<path d="M631.8 783.5H637.0" stroke="#e8b800"/>
<circle cx="550.4" cy="705.6" r="4.2" stroke="#f0f000"/>
<path d="M547.8 705.6H553.0M550.4 703.0V708.2" stroke="#f0f000"/>
<circle cx="524.2" cy="717.5" r="4.2" stroke="#f0f000"/>
<path d="M521.6 717.5H526.8M524.2 714.9V720.1" stroke="#f0f000"/>
<circle cx="552.4" cy="732.4" r="4.2" stroke="#e08020"/>
<path d="M549.8 732.4H555.0M552.4 729.8V735.0" stroke="#e08020"/>
<circle cx="528.3" cy="770.4" r="4.2" stroke="#e8b800"/>
<path d="M525.7 770.4H530.9M528.3 767.8V773.0" stroke="#e8b800"/>
<path d="M496 598.5H503" stroke="#e0a000" stroke-width="1.2"/>
</g>
</svg>
</div>


<div class="abs" style="left:8px;top:758px;width:245px;height:46px;background:#000"></div>
<div class="abs" style="left:9px;top:759px;width:243px;height:44px;border:1px solid #a8a8a8"></div>
<div class="abs lg" style="left:13px;top:762px">Symbols</div>
<div class="abs lg" style="left:52px;top:762px">-CG</div>
<div class="abs lg" style="left:78px;top:762px">-IC</div>
<div class="abs lg" style="left:98px;top:762px">+CG</div>
<div class="abs lg" style="left:125px;top:762px">+IC</div>
<div class="abs lg" style="left:153px;top:762px;letter-spacing:-0.15px">Strike age color codes</div>
<div class="abs lg" style="left:13px;top:775px">Recent</div>
<div class="abs lg" style="left:13px;top:788px">Old</div>
<div class="abs lg" style="left:153px;top:775px;color:#f0f000">15+</div>
<div class="abs lg" style="left:188px;top:775px;color:#f0c000">30+</div>
<div class="abs lg" style="left:223px;top:775px;color:#e0b000">45+</div>
<div class="abs lg" style="left:153px;top:788px;color:#f08000">60+</div>
<div class="abs lg" style="left:188px;top:788px;color:#e06000">75+</div>
<div class="abs lg" style="left:223px;top:788px;color:#f04000">90+</div>
<svg class="abs" style="left:0;top:750px" width="260" height="60" viewBox="0 750 260 60">
 <g fill="none" stroke-width="1.1">
  <g stroke="#00e8f0"><circle cx="60.5" cy="780.5" r="4.2"/><path d="M57.9 780.5H63.1M82 780.5H89.5"/><circle cx="110.4" cy="780.5" r="4.2"/><path d="M107.8 780.5H113M110.4 777.9V783.1M132 780.5H139.5M135.7 777V784"/></g>
  <g stroke="#f0f000"><circle cx="60.5" cy="793.6" r="4.2"/><path d="M57.9 793.6H63.1M82 793.6H89.5"/><circle cx="110.4" cy="793.6" r="4.2"/><path d="M107.8 793.6H113M110.4 791V796.2M132 793.6H139.5M135.7 790.1V797.1"/></g>
 </g>
</svg>
<div class="abs" style="left:685px;top:792px;width:121px;height:13px;background:#000"></div>
<div class="abs" style="left:689px;top:793px;font-size:10px;line-height:12px;color:#f0f0f0;letter-spacing:-0.3px">&copy;2005 Astrogenic Systems</div>
<!-- Box 1 -->
<div class="box" style="top:8px;height:320px"></div>
<div class="btn" style="left:820px;top:16px;width:57px;height:18px;background:#5c0000;color:#d8d8d8;letter-spacing:0.6px">STRIKE</div>
<div class="btn" style="left:883px;top:16px;width:58px;height:18px;background:#3a3a3a;color:#c0c0c0;letter-spacing:0.6px">NOISE</div>
<div class="btn" style="left:994px;top:16px;width:128px;height:18px;background:#383838;color:#fff;text-align:left">
 <span class="abs" style="left:4px;top:0;letter-spacing:0.8px">Bng 133°</span><span class="abs" style="left:80px;top:0;color:#00e000;letter-spacing:1px">396mi</span></div>

<div class="lbtn" style="left:821px;top:64px">Strikes/min</div>
<div class="lbtn" style="left:931px;top:64px">Close/min</div>
<div class="lbtn" style="left:1041px;top:64px">Noises/min</div>
<div class="big" style="left:822px;top:87px;color:#fff">2</div>
<div class="big" style="left:932px;top:87px;color:#fff">0</div>
<div class="big" style="left:1042px;top:87px;color:#c0c0c0">0</div>
<div class="abs t13 r" style="left:803px;width:100px;top:131px">Total Strikes</div>
<div class="abs t13 r" style="left:913px;width:100px;top:131px">Total Close</div>
<div class="abs t13 r" style="left:1023px;width:100px;top:131px">Total Noises</div>
<div class="abs t13 r" style="left:803px;width:100px;top:149px">759</div>
<div class="abs t13 r" style="left:913px;width:100px;top:149px">0</div>
<div class="abs t13 r" style="left:1023px;width:100px;top:149px">138</div>

<div class="abs t13" style="left:821px;top:202px;color:#c8c8c8;letter-spacing:0.75px">Lightning type distribution</div>
<div class="abs" style="left:821px;top:217px;width:303px;height:1px;background:#808080"></div>
<div class="abs t13 b" style="left:821px;top:224px">Cloud-ground</div>
<div class="abs t13 b" style="left:912px;top:224px">+</div>
<div class="bar" style="left:925px;top:227px"><div style="width:24px;background:#ff0000"></div></div>
<div class="abs t13 b" style="left:979px;top:224px;letter-spacing:1px">46%</div>
<div class="abs t13 b" style="left:1015px;top:224px">&minus;</div>
<div class="bar" style="left:1028px;top:227px"><div style="width:23px;background:#90c8f8"></div></div>
<div class="abs t13 b" style="left:1082px;top:224px;letter-spacing:1px">44%</div>
<div class="abs t13 b" style="left:821px;top:248px;color:#c8c8c8">Count</div>
<div class="abs t13 b" style="left:925px;top:248px;letter-spacing:1px">349</div>
<div class="abs t13 b" style="left:1028px;top:248px;letter-spacing:1px">336</div>
<div class="abs t13 b" style="left:821px;top:278px">Intracloud</div>
<div class="abs t13 b" style="left:912px;top:278px">+</div>
<div class="bar" style="left:925px;top:281px"><div style="width:2px;background:#e080c0"></div></div>
<div class="abs t13 b" style="left:979px;top:278px;letter-spacing:1px">3%</div>
<div class="abs t13 b" style="left:1015px;top:278px">&minus;</div>
<div class="bar" style="left:1028px;top:281px"><div style="width:4px;background:#00e000"></div></div>
<div class="abs t13 b" style="left:1082px;top:278px;letter-spacing:1px">7%</div>
<div class="abs t13 b" style="left:821px;top:302px;color:#c8c8c8">Count</div>
<div class="abs t13 b" style="left:925px;top:302px;letter-spacing:1px">22</div>
<div class="abs t13 b" style="left:1028px;top:302px;letter-spacing:1px">52</div>

<!-- Box 2 -->
<div class="box" style="top:333px;height:114px"></div>
<div class="abs b" style="left:821px;top:337px;font-size:17.5px;line-height:20px;color:#00e000;letter-spacing:1.5px">2/28/2026 10:05:19 PM</div>
<div class="abs" style="left:821px;top:358px;width:302px;height:1px;background:#808080"></div>
<div class="abs t13" style="left:821px;top:376px">Squelch</div>
<div class="abs t13" style="left:909px;top:376px">0</div>
<div class="abs t13" style="left:981px;top:376px">Upload</div>
<div class="abs t13" style="left:1061px;top:376px;color:#c0c0c0">Disabled</div>
<div class="abs t13" style="left:821px;top:396px">Persistence</div>
<div class="abs t13" style="left:909px;top:396px">90 min</div>
<div class="abs t13" style="left:981px;top:396px">Capture</div>
<div class="abs t13" style="left:1061px;top:396px;color:#00d000">Active</div>
<div class="abs t13" style="left:821px;top:416px">Range</div>
<div class="abs t13" style="left:909px;top:416px">313 mi</div>
<div class="abs t13" style="left:981px;top:416px">Receiver</div>
<div class="abs t13" style="left:1061px;top:416px;color:#00d000">Enabled</div>

<!-- Box 3 -->
<div class="box" style="top:453px;height:349px"></div>
<div class="abs t13" style="left:821px;top:463px;color:#c0c0c0">Uptime</div>
<div class="abs t13" style="left:909px;top:463px">1137:50</div>
<div class="abs t13" style="left:981px;top:463px;color:#c0c0c0">Peak time</div>
<div class="abs t13" style="left:1061px;top:463px;color:#c0c0c0">Plot</div>
<div class="abs t13" style="left:821px;top:486px;color:#c0c0c0">Peak rate</div>
<div class="abs t13" style="left:909px;top:486px">8/min</div>
<div class="abs t13" style="left:981px;top:486px">2:50 AM</div>
<div class="abs t13" style="left:1061px;top:486px">Strike</div>
<div class="abs t13" style="left:822px;top:517px;color:#c0c0c0">Trend graph</div>
<div class="abs t13" style="left:908px;top:517px">60 min</div>
<svg class="abs" style="left:812px;top:530px" width="326" height="282" viewBox="812 530 326 282">
 <g stroke="#c8c8c8" stroke-width="1" fill="none" shape-rendering="crispEdges">
  <path d="M1088.5 542.5V777.5M822 777.5H1089M1084 542.5h6M1084 581.5h5M1084 620.5h5M1084 659.5h5M1084 699.5h5M1084 738.5h5"/>
  <path d="M822.5 775v4M866.5 775v4M911.5 775v4M955.5 775v4M999.5 775v4M1044.5 775v4"/>
 </g>

 <g fill="none" stroke="#ffffff" stroke-width="1.1" stroke-linejoin="miter">
  <path d="M865.3 777.5L867.2 761.4H870.4L871.7 777.5M881.9 777.5L883.8 769.6H888.2L889.5 777.5M902.9 777.5L904.8 769.6H908.6L909.9 777.5M914 777.5L915.6 769.6H920.7L921.4 777.5L922.6 769.6H929.6L932.2 761.4H936L938 769.6H941L942.4 777.5"/>
  <path d="M969.8 777.5L973.7 761.4H978.5L980.9 777.5M984 777.5L986.4 769.6H989.6L990.8 777.5L992 769.6H995L996.7 777.5M1001.4 777.5L1003 761.4H1007.8L1009.3 769.6H1011.7L1013.3 777.5M1014.9 777.5L1018.8 761.4L1022 777.5L1023.6 769.6H1026.7L1029 777.5M1030.7 777.5L1033.9 761.4H1037L1040.2 777.5M1043.4 777.5L1048.1 753.4L1053.6 777.5M1055.2 777.5L1058.4 769.6H1064L1066.3 777.5M1072.6 777.5L1075.8 761.4L1079 777.5M1081.3 777.5L1082.9 769.6H1086L1087.7 777.5"/>
 </g>
 <g fill="none" stroke-width="1.1">
  <path stroke="#ff0000" d="M927 777L930 770M1007 777L1007.8 771.6M1015.7 777.5L1019.6 769.3M1044 777.5L1048.1 759M1075.8 771.6L1078 777.5"/>
  <path stroke="#00e000" d="M929 777L931 770H936L937 777"/>
  <path stroke="#80c0ff" d="M933 777V770M1008.5 770L1009.3 777.5M1016.5 770L1021 777.5M1032 769.6H1038.6M1045 769.6L1049 777.5M1073.4 777.5L1076.6 769.6"/>
 </g>
 <g fill="#c8c8c8" font-size="12px" font-family="Liberation Sans">
  <text x="1092" y="547">30</text><text x="1092" y="625">20</text><text x="1092" y="704">10</text>
  <text x="820" y="793">60</text><text x="864" y="793">50</text><text x="909" y="793">40</text><text x="953" y="793">30</text>
  <text x="997" y="793">20</text><text x="1042" y="793">10</text><text x="1087" y="793">0</text><text x="1101" y="793">min</text>
 </g>
</svg>
</body></html>
